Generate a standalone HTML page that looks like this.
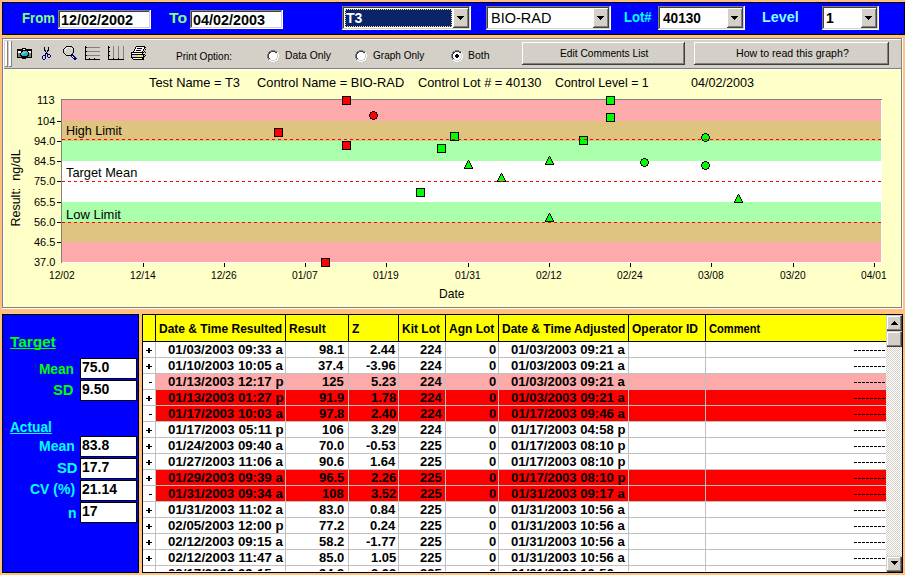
<!DOCTYPE html>
<html><head><meta charset="utf-8"><title>QC Chart</title>
<style>
html,body{margin:0;padding:0;}
body{width:905px;height:575px;position:relative;overflow:hidden;background:#FFC080;font-family:"Liberation Sans",sans-serif;}
.r{position:absolute;}
.t{position:absolute;white-space:nowrap;font-family:"Liberation Sans",sans-serif;}
svg{position:absolute;left:0;top:0;}
</style></head><body>
<div class="r" style="left:2px;top:2px;width:903px;height:33px;background:#0000FF;box-sizing:border-box;border:1px solid #000;"></div>
<div class="t" style="left:22.00px;top:11px;font-size:14px;line-height:14px;color:#80FF80;font-weight:bold;transform:scaleX(0.9429);transform-origin:0 0;">From</div>
<div class="r" style="left:58px;top:10px;width:93px;height:19px;background:#fff;"></div>
<div class="r" style="left:58px;top:10px;width:92px;height:1px;background:#808080;"></div>
<div class="r" style="left:58px;top:10px;width:1px;height:18px;background:#808080;"></div>
<div class="r" style="left:59px;top:11px;width:90px;height:1px;background:#404040;"></div>
<div class="r" style="left:59px;top:11px;width:1px;height:16px;background:#404040;"></div>
<div class="r" style="left:59px;top:27px;width:91px;height:1px;background:#D4D0C8;"></div>
<div class="r" style="left:149px;top:11px;width:1px;height:17px;background:#D4D0C8;"></div>
<div class="r" style="left:60px;top:12px;width:89px;height:15px;background:#fff;"></div>
<div class="t" style="left:61.00px;top:13px;font-size:14px;line-height:14px;color:#000;font-weight:bold;transform:scaleX(1.0286);transform-origin:0 0;">12/02/2002</div>
<div class="t" style="left:169.00px;top:11px;font-size:14px;line-height:14px;color:#80FF80;font-weight:bold;transform:scaleX(1.1250);transform-origin:0 0;">To</div>
<div class="r" style="left:190px;top:10px;width:93px;height:19px;background:#fff;"></div>
<div class="r" style="left:190px;top:10px;width:92px;height:1px;background:#808080;"></div>
<div class="r" style="left:190px;top:10px;width:1px;height:18px;background:#808080;"></div>
<div class="r" style="left:191px;top:11px;width:90px;height:1px;background:#404040;"></div>
<div class="r" style="left:191px;top:11px;width:1px;height:16px;background:#404040;"></div>
<div class="r" style="left:191px;top:27px;width:91px;height:1px;background:#D4D0C8;"></div>
<div class="r" style="left:281px;top:11px;width:1px;height:17px;background:#D4D0C8;"></div>
<div class="r" style="left:192px;top:12px;width:89px;height:15px;background:#fff;"></div>
<div class="t" style="left:193.00px;top:13px;font-size:14px;line-height:14px;color:#000;font-weight:bold;transform:scaleX(1.0286);transform-origin:0 0;">04/02/2003</div>
<div class="r" style="left:342px;top:6px;width:129px;height:24px;background:#fff;"></div>
<div class="r" style="left:342px;top:6px;width:128px;height:1px;background:#808080;"></div>
<div class="r" style="left:342px;top:6px;width:1px;height:23px;background:#808080;"></div>
<div class="r" style="left:343px;top:7px;width:126px;height:1px;background:#404040;"></div>
<div class="r" style="left:343px;top:7px;width:1px;height:21px;background:#404040;"></div>
<div class="r" style="left:343px;top:28px;width:127px;height:1px;background:#D4D0C8;"></div>
<div class="r" style="left:469px;top:7px;width:1px;height:22px;background:#D4D0C8;"></div>
<div class="r" style="left:344px;top:8px;width:125px;height:20px;background:#fff;"></div>
<div class="r" style="left:453px;top:8px;width:16px;height:20px;background:#D4D0C8;"></div>
<div class="r" style="left:453px;top:8px;width:16px;height:1px;background:#fff;"></div>
<div class="r" style="left:453px;top:8px;width:1px;height:20px;background:#fff;"></div>
<div class="r" style="left:453px;top:27px;width:16px;height:1px;background:#404040;"></div>
<div class="r" style="left:468px;top:8px;width:1px;height:20px;background:#404040;"></div>
<div class="r" style="left:454px;top:26px;width:14px;height:1px;background:#808080;"></div>
<div class="r" style="left:467px;top:9px;width:1px;height:18px;background:#808080;"></div>
<div class="r" style="left:457px;top:16px;width:7px;height:1px;background:#000;"></div>
<div class="r" style="left:458px;top:17px;width:5px;height:1px;background:#000;"></div>
<div class="r" style="left:459px;top:18px;width:3px;height:1px;background:#000;"></div>
<div class="r" style="left:460px;top:19px;width:1px;height:1px;background:#000;"></div>
<div class="r" style="left:344px;top:8px;width:109px;height:20px;background:#fff;"></div>
<div class="r" style="left:345px;top:9px;width:107px;height:18px;background:#0A246A;box-sizing:border-box;border:1px dotted #F0D890;"></div>
<div class="t" style="left:346.00px;top:11px;font-size:14px;line-height:14px;color:#fff;font-weight:bold;">T3</div>
<div class="r" style="left:486px;top:6px;width:125px;height:24px;background:#fff;"></div>
<div class="r" style="left:486px;top:6px;width:124px;height:1px;background:#808080;"></div>
<div class="r" style="left:486px;top:6px;width:1px;height:23px;background:#808080;"></div>
<div class="r" style="left:487px;top:7px;width:122px;height:1px;background:#404040;"></div>
<div class="r" style="left:487px;top:7px;width:1px;height:21px;background:#404040;"></div>
<div class="r" style="left:487px;top:28px;width:123px;height:1px;background:#D4D0C8;"></div>
<div class="r" style="left:609px;top:7px;width:1px;height:22px;background:#D4D0C8;"></div>
<div class="r" style="left:488px;top:8px;width:121px;height:20px;background:#fff;"></div>
<div class="r" style="left:593px;top:8px;width:16px;height:20px;background:#D4D0C8;"></div>
<div class="r" style="left:593px;top:8px;width:16px;height:1px;background:#fff;"></div>
<div class="r" style="left:593px;top:8px;width:1px;height:20px;background:#fff;"></div>
<div class="r" style="left:593px;top:27px;width:16px;height:1px;background:#404040;"></div>
<div class="r" style="left:608px;top:8px;width:1px;height:20px;background:#404040;"></div>
<div class="r" style="left:594px;top:26px;width:14px;height:1px;background:#808080;"></div>
<div class="r" style="left:607px;top:9px;width:1px;height:18px;background:#808080;"></div>
<div class="r" style="left:597px;top:16px;width:7px;height:1px;background:#000;"></div>
<div class="r" style="left:598px;top:17px;width:5px;height:1px;background:#000;"></div>
<div class="r" style="left:599px;top:18px;width:3px;height:1px;background:#000;"></div>
<div class="r" style="left:600px;top:19px;width:1px;height:1px;background:#000;"></div>
<div class="t" style="left:491.00px;top:11px;font-size:14px;line-height:14px;color:#000;transform:scaleX(1.0345);transform-origin:0 0;">BIO-RAD</div>
<div class="t" style="left:624.00px;top:10px;font-size:14px;line-height:14px;color:#00FFFF;font-weight:bold;transform:scaleX(0.9333);transform-origin:0 0;">Lot#</div>
<div class="r" style="left:658px;top:6px;width:87px;height:24px;background:#fff;"></div>
<div class="r" style="left:658px;top:6px;width:86px;height:1px;background:#808080;"></div>
<div class="r" style="left:658px;top:6px;width:1px;height:23px;background:#808080;"></div>
<div class="r" style="left:659px;top:7px;width:84px;height:1px;background:#404040;"></div>
<div class="r" style="left:659px;top:7px;width:1px;height:21px;background:#404040;"></div>
<div class="r" style="left:659px;top:28px;width:85px;height:1px;background:#D4D0C8;"></div>
<div class="r" style="left:743px;top:7px;width:1px;height:22px;background:#D4D0C8;"></div>
<div class="r" style="left:660px;top:8px;width:83px;height:20px;background:#fff;"></div>
<div class="r" style="left:727px;top:8px;width:16px;height:20px;background:#D4D0C8;"></div>
<div class="r" style="left:727px;top:8px;width:16px;height:1px;background:#fff;"></div>
<div class="r" style="left:727px;top:8px;width:1px;height:20px;background:#fff;"></div>
<div class="r" style="left:727px;top:27px;width:16px;height:1px;background:#404040;"></div>
<div class="r" style="left:742px;top:8px;width:1px;height:20px;background:#404040;"></div>
<div class="r" style="left:728px;top:26px;width:14px;height:1px;background:#808080;"></div>
<div class="r" style="left:741px;top:9px;width:1px;height:18px;background:#808080;"></div>
<div class="r" style="left:731px;top:16px;width:7px;height:1px;background:#000;"></div>
<div class="r" style="left:732px;top:17px;width:5px;height:1px;background:#000;"></div>
<div class="r" style="left:733px;top:18px;width:3px;height:1px;background:#000;"></div>
<div class="r" style="left:734px;top:19px;width:1px;height:1px;background:#000;"></div>
<div class="t" style="left:663.00px;top:11px;font-size:14px;line-height:14px;color:#000;font-weight:bold;transform:scaleX(0.9744);transform-origin:0 0;">40130</div>
<div class="t" style="left:762.00px;top:10px;font-size:14px;line-height:14px;color:#80FFFF;font-weight:bold;transform:scaleX(1.0278);transform-origin:0 0;">Level</div>
<div class="r" style="left:822px;top:6px;width:57px;height:24px;background:#fff;"></div>
<div class="r" style="left:822px;top:6px;width:56px;height:1px;background:#808080;"></div>
<div class="r" style="left:822px;top:6px;width:1px;height:23px;background:#808080;"></div>
<div class="r" style="left:823px;top:7px;width:54px;height:1px;background:#404040;"></div>
<div class="r" style="left:823px;top:7px;width:1px;height:21px;background:#404040;"></div>
<div class="r" style="left:823px;top:28px;width:55px;height:1px;background:#D4D0C8;"></div>
<div class="r" style="left:877px;top:7px;width:1px;height:22px;background:#D4D0C8;"></div>
<div class="r" style="left:824px;top:8px;width:53px;height:20px;background:#fff;"></div>
<div class="r" style="left:861px;top:8px;width:16px;height:20px;background:#D4D0C8;"></div>
<div class="r" style="left:861px;top:8px;width:16px;height:1px;background:#fff;"></div>
<div class="r" style="left:861px;top:8px;width:1px;height:20px;background:#fff;"></div>
<div class="r" style="left:861px;top:27px;width:16px;height:1px;background:#404040;"></div>
<div class="r" style="left:876px;top:8px;width:1px;height:20px;background:#404040;"></div>
<div class="r" style="left:862px;top:26px;width:14px;height:1px;background:#808080;"></div>
<div class="r" style="left:875px;top:9px;width:1px;height:18px;background:#808080;"></div>
<div class="r" style="left:865px;top:16px;width:7px;height:1px;background:#000;"></div>
<div class="r" style="left:866px;top:17px;width:5px;height:1px;background:#000;"></div>
<div class="r" style="left:867px;top:18px;width:3px;height:1px;background:#000;"></div>
<div class="r" style="left:868px;top:19px;width:1px;height:1px;background:#000;"></div>
<div class="t" style="left:826.00px;top:11px;font-size:14px;line-height:14px;color:#000;font-weight:bold;">1</div>
<div class="r" style="left:2px;top:38px;width:901px;height:271px;background:#FFFFC8;"></div>
<div class="r" style="left:2px;top:38px;width:900px;height:1px;background:#808080;"></div>
<div class="r" style="left:2px;top:38px;width:1px;height:270px;background:#808080;"></div>
<div class="r" style="left:2px;top:308px;width:901px;height:1px;background:#fff;"></div>
<div class="r" style="left:902px;top:38px;width:1px;height:271px;background:#fff;"></div>
<div class="r" style="left:3px;top:39px;width:899px;height:1px;background:#fff;"></div>
<div class="r" style="left:3px;top:39px;width:1px;height:269px;background:#fff;"></div>
<div class="r" style="left:3px;top:307px;width:899px;height:1px;background:#808080;"></div>
<div class="r" style="left:901px;top:39px;width:1px;height:269px;background:#808080;"></div>
<div class="r" style="left:4px;top:40px;width:897px;height:28px;background:#D4D0C8;"></div>
<div class="r" style="left:4px;top:68px;width:897px;height:1px;background:#808080;"></div>
<div class="r" style="left:4px;top:69px;width:897px;height:1px;background:#fff;"></div>
<div class="r" style="left:5px;top:41px;width:2px;height:25px;background:#fff;"></div>
<div class="r" style="left:7px;top:41px;width:1px;height:26px;background:#808080;"></div>
<div class="r" style="left:5px;top:66px;width:3px;height:1px;background:#808080;"></div>
<div class="r" style="left:9px;top:41px;width:2px;height:25px;background:#fff;"></div>
<div class="r" style="left:11px;top:41px;width:1px;height:26px;background:#808080;"></div>
<div class="r" style="left:9px;top:66px;width:3px;height:1px;background:#808080;"></div>
<div class="t" style="left:176.00px;top:51px;font-size:11px;line-height:11px;color:#000;transform:scaleX(0.9180);transform-origin:0 0;">Print Option:</div>
<svg width="905" height="575" viewBox="0 0 905 575" shape-rendering="crispEdges" style="pointer-events:none"><rect x="22" y="48" width="4" height="1" fill="#000"/><rect x="17" y="49" width="6" height="1" fill="#000"/><rect x="23" y="49" width="2" height="1" fill="#fff"/><rect x="25" y="49" width="7" height="1" fill="#000"/><rect x="17" y="50" width="15" height="1" fill="#000"/><rect x="17" y="51" width="1" height="1" fill="#000"/><rect x="18" y="51" width="3" height="1" fill="#fff"/><rect x="21" y="51" width="2" height="1" fill="#000"/><rect x="23" y="51" width="4" height="1" fill="#A0A0A0"/><rect x="27" y="51" width="1" height="1" fill="#000"/><rect x="28" y="51" width="3" height="1" fill="#fff"/><rect x="31" y="51" width="1" height="1" fill="#000"/><rect x="17" y="52" width="1" height="1" fill="#000"/><rect x="18" y="52" width="3" height="1" fill="#fff"/><rect x="21" y="52" width="1" height="1" fill="#000"/><rect x="22" y="52" width="1" height="1" fill="#A0A0A0"/><rect x="23" y="52" width="2" height="1" fill="#00FFFF"/><rect x="25" y="52" width="2" height="1" fill="#A0A0A0"/><rect x="27" y="52" width="1" height="1" fill="#00C0C0"/><rect x="28" y="52" width="1" height="1" fill="#000"/><rect x="29" y="52" width="2" height="1" fill="#fff"/><rect x="31" y="52" width="1" height="1" fill="#000"/><rect x="17" y="53" width="1" height="1" fill="#000"/><rect x="18" y="53" width="2" height="1" fill="#808080"/><rect x="20" y="53" width="1" height="1" fill="#000"/><rect x="21" y="53" width="1" height="1" fill="#A0A0A0"/><rect x="22" y="53" width="2" height="1" fill="#00FFFF"/><rect x="24" y="53" width="1" height="1" fill="#A0A0A0"/><rect x="25" y="53" width="3" height="1" fill="#00C0C0"/><rect x="28" y="53" width="1" height="1" fill="#000"/><rect x="29" y="53" width="2" height="1" fill="#808080"/><rect x="31" y="53" width="1" height="1" fill="#000"/><rect x="17" y="54" width="1" height="1" fill="#000"/><rect x="18" y="54" width="2" height="1" fill="#808080"/><rect x="20" y="54" width="1" height="1" fill="#000"/><rect x="21" y="54" width="2" height="1" fill="#A0A0A0"/><rect x="23" y="54" width="5" height="1" fill="#00C0C0"/><rect x="28" y="54" width="1" height="1" fill="#000"/><rect x="29" y="54" width="2" height="1" fill="#808080"/><rect x="31" y="54" width="1" height="1" fill="#000"/><rect x="17" y="55" width="1" height="1" fill="#000"/><rect x="18" y="55" width="2" height="1" fill="#808080"/><rect x="20" y="55" width="2" height="1" fill="#000"/><rect x="22" y="55" width="1" height="1" fill="#A0A0A0"/><rect x="23" y="55" width="4" height="1" fill="#00C0C0"/><rect x="27" y="55" width="2" height="1" fill="#000"/><rect x="29" y="55" width="2" height="1" fill="#808080"/><rect x="31" y="55" width="1" height="1" fill="#000"/><rect x="17" y="56" width="1" height="1" fill="#000"/><rect x="18" y="56" width="3" height="1" fill="#808080"/><rect x="21" y="56" width="7" height="1" fill="#000"/><rect x="28" y="56" width="3" height="1" fill="#808080"/><rect x="31" y="56" width="1" height="1" fill="#000"/><rect x="17" y="57" width="15" height="1" fill="#000"/><rect x="22" y="58" width="4" height="1" fill="#000"/><rect x="44" y="47" width="1" height="1" fill="#000"/><rect x="48" y="47" width="1" height="1" fill="#000"/><rect x="44" y="48" width="1" height="1" fill="#000"/><rect x="48" y="48" width="1" height="1" fill="#000"/><rect x="44" y="49" width="1" height="1" fill="#000"/><rect x="48" y="49" width="1" height="1" fill="#000"/><rect x="44" y="50" width="2" height="1" fill="#000"/><rect x="47" y="50" width="2" height="1" fill="#000"/><rect x="45" y="51" width="1" height="1" fill="#000"/><rect x="47" y="51" width="1" height="1" fill="#000"/><rect x="46" y="52" width="1" height="1" fill="#000"/><rect x="45" y="53" width="1" height="1" fill="#000080"/><rect x="46" y="53" width="1" height="1" fill="#000"/><rect x="47" y="53" width="1" height="1" fill="#000080"/><rect x="45" y="54" width="1" height="1" fill="#000080"/><rect x="47" y="54" width="3" height="1" fill="#000080"/><rect x="43" y="55" width="3" height="1" fill="#000080"/><rect x="47" y="55" width="1" height="1" fill="#000080"/><rect x="50" y="55" width="1" height="1" fill="#000080"/><rect x="42" y="56" width="1" height="1" fill="#000080"/><rect x="45" y="56" width="1" height="1" fill="#000080"/><rect x="47" y="56" width="1" height="1" fill="#000080"/><rect x="50" y="56" width="1" height="1" fill="#000080"/><rect x="42" y="57" width="1" height="1" fill="#000080"/><rect x="45" y="57" width="1" height="1" fill="#000080"/><rect x="48" y="57" width="2" height="1" fill="#000080"/><rect x="42" y="58" width="1" height="1" fill="#000080"/><rect x="45" y="58" width="1" height="1" fill="#000080"/><rect x="43" y="59" width="2" height="1" fill="#000080"/><rect x="66" y="46" width="6" height="1" fill="#000"/><rect x="65" y="47" width="1" height="1" fill="#000"/><rect x="67" y="47" width="3" height="1" fill="#fff"/><rect x="72" y="47" width="1" height="1" fill="#000"/><rect x="64" y="48" width="1" height="1" fill="#000"/><rect x="66" y="48" width="1" height="1" fill="#fff"/><rect x="71" y="48" width="1" height="1" fill="#fff"/><rect x="73" y="48" width="1" height="1" fill="#000"/><rect x="63" y="49" width="1" height="1" fill="#000"/><rect x="65" y="49" width="1" height="1" fill="#fff"/><rect x="73" y="49" width="1" height="1" fill="#000"/><rect x="63" y="50" width="1" height="1" fill="#000"/><rect x="65" y="50" width="1" height="1" fill="#fff"/><rect x="73" y="50" width="1" height="1" fill="#000"/><rect x="63" y="51" width="1" height="1" fill="#000"/><rect x="73" y="51" width="1" height="1" fill="#000"/><rect x="63" y="52" width="1" height="1" fill="#000"/><rect x="73" y="52" width="1" height="1" fill="#000"/><rect x="64" y="53" width="1" height="1" fill="#000"/><rect x="72" y="53" width="1" height="1" fill="#000"/><rect x="65" y="54" width="1" height="1" fill="#000"/><rect x="71" y="54" width="1" height="1" fill="#000"/><rect x="72" y="54" width="1" height="1" fill="#000080"/><rect x="66" y="55" width="5" height="1" fill="#000"/><rect x="71" y="55" width="3" height="1" fill="#000080"/><rect x="71" y="56" width="1" height="1" fill="#000080"/><rect x="72" y="56" width="1" height="1" fill="#fff"/><rect x="73" y="56" width="2" height="1" fill="#000080"/><rect x="72" y="57" width="1" height="1" fill="#000080"/><rect x="73" y="57" width="1" height="1" fill="#fff"/><rect x="74" y="57" width="2" height="1" fill="#000080"/><rect x="73" y="58" width="4" height="1" fill="#000080"/><rect x="74" y="59" width="2" height="1" fill="#000080"/><rect x="85" y="46" width="1" height="1" fill="#000"/><rect x="85" y="47" width="2" height="1" fill="#000"/><rect x="87" y="47" width="13" height="1" fill="#808080"/><rect x="85" y="48" width="1" height="1" fill="#000"/><rect x="85" y="49" width="1" height="1" fill="#000"/><rect x="85" y="50" width="1" height="1" fill="#000"/><rect x="85" y="51" width="2" height="1" fill="#000"/><rect x="87" y="51" width="13" height="1" fill="#808080"/><rect x="85" y="52" width="1" height="1" fill="#000"/><rect x="85" y="53" width="1" height="1" fill="#000"/><rect x="85" y="54" width="1" height="1" fill="#000"/><rect x="85" y="55" width="2" height="1" fill="#000"/><rect x="87" y="55" width="13" height="1" fill="#808080"/><rect x="85" y="56" width="1" height="1" fill="#000"/><rect x="85" y="57" width="1" height="1" fill="#000"/><rect x="85" y="58" width="1" height="1" fill="#000"/><rect x="89" y="58" width="1" height="1" fill="#000"/><rect x="94" y="58" width="1" height="1" fill="#000"/><rect x="85" y="59" width="15" height="1" fill="#000"/><rect x="108" y="46" width="1" height="1" fill="#000"/><rect x="113" y="46" width="1" height="1" fill="#808080"/><rect x="118" y="46" width="1" height="1" fill="#808080"/><rect x="123" y="46" width="1" height="1" fill="#808080"/><rect x="108" y="47" width="2" height="1" fill="#000"/><rect x="113" y="47" width="1" height="1" fill="#808080"/><rect x="118" y="47" width="1" height="1" fill="#808080"/><rect x="123" y="47" width="1" height="1" fill="#808080"/><rect x="108" y="48" width="1" height="1" fill="#000"/><rect x="113" y="48" width="1" height="1" fill="#808080"/><rect x="118" y="48" width="1" height="1" fill="#808080"/><rect x="123" y="48" width="1" height="1" fill="#808080"/><rect x="108" y="49" width="1" height="1" fill="#000"/><rect x="113" y="49" width="1" height="1" fill="#808080"/><rect x="118" y="49" width="1" height="1" fill="#808080"/><rect x="123" y="49" width="1" height="1" fill="#808080"/><rect x="108" y="50" width="1" height="1" fill="#000"/><rect x="113" y="50" width="1" height="1" fill="#808080"/><rect x="118" y="50" width="1" height="1" fill="#808080"/><rect x="123" y="50" width="1" height="1" fill="#808080"/><rect x="108" y="51" width="2" height="1" fill="#000"/><rect x="113" y="51" width="1" height="1" fill="#808080"/><rect x="118" y="51" width="1" height="1" fill="#808080"/><rect x="123" y="51" width="1" height="1" fill="#808080"/><rect x="108" y="52" width="1" height="1" fill="#000"/><rect x="113" y="52" width="1" height="1" fill="#808080"/><rect x="118" y="52" width="1" height="1" fill="#808080"/><rect x="123" y="52" width="1" height="1" fill="#808080"/><rect x="108" y="53" width="1" height="1" fill="#000"/><rect x="113" y="53" width="1" height="1" fill="#808080"/><rect x="118" y="53" width="1" height="1" fill="#808080"/><rect x="123" y="53" width="1" height="1" fill="#808080"/><rect x="108" y="54" width="1" height="1" fill="#000"/><rect x="113" y="54" width="1" height="1" fill="#808080"/><rect x="118" y="54" width="1" height="1" fill="#808080"/><rect x="123" y="54" width="1" height="1" fill="#808080"/><rect x="108" y="55" width="2" height="1" fill="#000"/><rect x="113" y="55" width="1" height="1" fill="#808080"/><rect x="118" y="55" width="1" height="1" fill="#808080"/><rect x="123" y="55" width="1" height="1" fill="#808080"/><rect x="108" y="56" width="1" height="1" fill="#000"/><rect x="113" y="56" width="1" height="1" fill="#808080"/><rect x="118" y="56" width="1" height="1" fill="#808080"/><rect x="123" y="56" width="1" height="1" fill="#808080"/><rect x="108" y="57" width="1" height="1" fill="#000"/><rect x="113" y="57" width="1" height="1" fill="#808080"/><rect x="118" y="57" width="1" height="1" fill="#808080"/><rect x="123" y="57" width="1" height="1" fill="#808080"/><rect x="108" y="58" width="1" height="1" fill="#000"/><rect x="113" y="58" width="1" height="1" fill="#000"/><rect x="118" y="58" width="1" height="1" fill="#000"/><rect x="123" y="58" width="1" height="1" fill="#808080"/><rect x="108" y="59" width="16" height="1" fill="#000"/><rect x="136" y="46" width="9" height="1" fill="#000"/><rect x="135" y="47" width="1" height="1" fill="#000"/><rect x="136" y="47" width="8" height="1" fill="#fff"/><rect x="144" y="47" width="2" height="1" fill="#000"/><rect x="135" y="48" width="1" height="1" fill="#000"/><rect x="136" y="48" width="1" height="1" fill="#fff"/><rect x="137" y="48" width="5" height="1" fill="#000"/><rect x="142" y="48" width="2" height="1" fill="#fff"/><rect x="144" y="48" width="1" height="1" fill="#000"/><rect x="134" y="49" width="1" height="1" fill="#000"/><rect x="135" y="49" width="8" height="1" fill="#fff"/><rect x="143" y="49" width="1" height="1" fill="#000"/><rect x="144" y="49" width="1" height="1" fill="#D4D0C8"/><rect x="145" y="49" width="1" height="1" fill="#000"/><rect x="134" y="50" width="1" height="1" fill="#000"/><rect x="135" y="50" width="1" height="1" fill="#fff"/><rect x="136" y="50" width="5" height="1" fill="#000"/><rect x="141" y="50" width="2" height="1" fill="#fff"/><rect x="143" y="50" width="1" height="1" fill="#000"/><rect x="144" y="50" width="1" height="1" fill="#D4D0C8"/><rect x="133" y="51" width="1" height="1" fill="#000"/><rect x="134" y="51" width="8" height="1" fill="#fff"/><rect x="142" y="51" width="1" height="1" fill="#000"/><rect x="144" y="51" width="1" height="1" fill="#000"/><rect x="131" y="52" width="13" height="1" fill="#000"/><rect x="144" y="52" width="1" height="1" fill="#D4D0C8"/><rect x="145" y="52" width="1" height="1" fill="#000"/><rect x="131" y="53" width="1" height="1" fill="#000"/><rect x="132" y="53" width="10" height="1" fill="#fff"/><rect x="142" y="53" width="1" height="1" fill="#000"/><rect x="143" y="53" width="2" height="1" fill="#D4D0C8"/><rect x="131" y="54" width="14" height="1" fill="#000"/><rect x="131" y="55" width="1" height="1" fill="#000"/><rect x="132" y="55" width="6" height="1" fill="#D4D0C8"/><rect x="138" y="55" width="3" height="1" fill="#FFFF00"/><rect x="141" y="55" width="2" height="1" fill="#D4D0C8"/><rect x="143" y="55" width="1" height="1" fill="#000"/><rect x="145" y="55" width="1" height="1" fill="#000"/><rect x="131" y="56" width="1" height="1" fill="#000"/><rect x="132" y="56" width="6" height="1" fill="#D4D0C8"/><rect x="138" y="56" width="3" height="1" fill="#FFFF00"/><rect x="141" y="56" width="2" height="1" fill="#D4D0C8"/><rect x="143" y="56" width="2" height="1" fill="#000"/><rect x="131" y="57" width="13" height="1" fill="#000"/><rect x="144" y="57" width="1" height="1" fill="#D4D0C8"/><rect x="132" y="58" width="1" height="1" fill="#000"/><rect x="133" y="58" width="9" height="1" fill="#fff"/><rect x="142" y="58" width="2" height="1" fill="#000"/><rect x="133" y="59" width="11" height="1" fill="#000"/><rect x="271" y="50" width="4" height="1" fill="#808080"/><rect x="269" y="51" width="2" height="1" fill="#808080"/><rect x="271" y="51" width="4" height="1" fill="#404040"/><rect x="275" y="51" width="2" height="1" fill="#808080"/><rect x="268" y="52" width="1" height="1" fill="#808080"/><rect x="269" y="52" width="2" height="1" fill="#404040"/><rect x="271" y="52" width="4" height="1" fill="#fff"/><rect x="275" y="52" width="2" height="1" fill="#404040"/><rect x="277" y="52" width="1" height="1" fill="#fff"/><rect x="268" y="53" width="1" height="1" fill="#808080"/><rect x="269" y="53" width="1" height="1" fill="#404040"/><rect x="270" y="53" width="6" height="1" fill="#fff"/><rect x="276" y="53" width="1" height="1" fill="#D4D0C8"/><rect x="277" y="53" width="1" height="1" fill="#fff"/><rect x="267" y="54" width="1" height="1" fill="#808080"/><rect x="268" y="54" width="1" height="1" fill="#404040"/><rect x="269" y="54" width="8" height="1" fill="#fff"/><rect x="277" y="54" width="1" height="1" fill="#D4D0C8"/><rect x="278" y="54" width="1" height="1" fill="#fff"/><rect x="267" y="55" width="1" height="1" fill="#808080"/><rect x="268" y="55" width="1" height="1" fill="#404040"/><rect x="269" y="55" width="8" height="1" fill="#fff"/><rect x="277" y="55" width="1" height="1" fill="#D4D0C8"/><rect x="278" y="55" width="1" height="1" fill="#fff"/><rect x="267" y="56" width="1" height="1" fill="#808080"/><rect x="268" y="56" width="1" height="1" fill="#404040"/><rect x="269" y="56" width="8" height="1" fill="#fff"/><rect x="277" y="56" width="1" height="1" fill="#D4D0C8"/><rect x="278" y="56" width="1" height="1" fill="#fff"/><rect x="267" y="57" width="1" height="1" fill="#808080"/><rect x="268" y="57" width="1" height="1" fill="#404040"/><rect x="269" y="57" width="8" height="1" fill="#fff"/><rect x="277" y="57" width="1" height="1" fill="#D4D0C8"/><rect x="278" y="57" width="1" height="1" fill="#fff"/><rect x="268" y="58" width="1" height="1" fill="#808080"/><rect x="269" y="58" width="1" height="1" fill="#404040"/><rect x="270" y="58" width="6" height="1" fill="#fff"/><rect x="276" y="58" width="1" height="1" fill="#D4D0C8"/><rect x="277" y="58" width="1" height="1" fill="#fff"/><rect x="268" y="59" width="1" height="1" fill="#808080"/><rect x="269" y="59" width="2" height="1" fill="#D4D0C8"/><rect x="271" y="59" width="4" height="1" fill="#fff"/><rect x="275" y="59" width="2" height="1" fill="#D4D0C8"/><rect x="277" y="59" width="1" height="1" fill="#fff"/><rect x="269" y="60" width="2" height="1" fill="#fff"/><rect x="271" y="60" width="4" height="1" fill="#D4D0C8"/><rect x="275" y="60" width="2" height="1" fill="#fff"/><rect x="271" y="61" width="4" height="1" fill="#fff"/><rect x="359" y="50" width="4" height="1" fill="#808080"/><rect x="357" y="51" width="2" height="1" fill="#808080"/><rect x="359" y="51" width="4" height="1" fill="#404040"/><rect x="363" y="51" width="2" height="1" fill="#808080"/><rect x="356" y="52" width="1" height="1" fill="#808080"/><rect x="357" y="52" width="2" height="1" fill="#404040"/><rect x="359" y="52" width="4" height="1" fill="#fff"/><rect x="363" y="52" width="2" height="1" fill="#404040"/><rect x="365" y="52" width="1" height="1" fill="#fff"/><rect x="356" y="53" width="1" height="1" fill="#808080"/><rect x="357" y="53" width="1" height="1" fill="#404040"/><rect x="358" y="53" width="6" height="1" fill="#fff"/><rect x="364" y="53" width="1" height="1" fill="#D4D0C8"/><rect x="365" y="53" width="1" height="1" fill="#fff"/><rect x="355" y="54" width="1" height="1" fill="#808080"/><rect x="356" y="54" width="1" height="1" fill="#404040"/><rect x="357" y="54" width="8" height="1" fill="#fff"/><rect x="365" y="54" width="1" height="1" fill="#D4D0C8"/><rect x="366" y="54" width="1" height="1" fill="#fff"/><rect x="355" y="55" width="1" height="1" fill="#808080"/><rect x="356" y="55" width="1" height="1" fill="#404040"/><rect x="357" y="55" width="8" height="1" fill="#fff"/><rect x="365" y="55" width="1" height="1" fill="#D4D0C8"/><rect x="366" y="55" width="1" height="1" fill="#fff"/><rect x="355" y="56" width="1" height="1" fill="#808080"/><rect x="356" y="56" width="1" height="1" fill="#404040"/><rect x="357" y="56" width="8" height="1" fill="#fff"/><rect x="365" y="56" width="1" height="1" fill="#D4D0C8"/><rect x="366" y="56" width="1" height="1" fill="#fff"/><rect x="355" y="57" width="1" height="1" fill="#808080"/><rect x="356" y="57" width="1" height="1" fill="#404040"/><rect x="357" y="57" width="8" height="1" fill="#fff"/><rect x="365" y="57" width="1" height="1" fill="#D4D0C8"/><rect x="366" y="57" width="1" height="1" fill="#fff"/><rect x="356" y="58" width="1" height="1" fill="#808080"/><rect x="357" y="58" width="1" height="1" fill="#404040"/><rect x="358" y="58" width="6" height="1" fill="#fff"/><rect x="364" y="58" width="1" height="1" fill="#D4D0C8"/><rect x="365" y="58" width="1" height="1" fill="#fff"/><rect x="356" y="59" width="1" height="1" fill="#808080"/><rect x="357" y="59" width="2" height="1" fill="#D4D0C8"/><rect x="359" y="59" width="4" height="1" fill="#fff"/><rect x="363" y="59" width="2" height="1" fill="#D4D0C8"/><rect x="365" y="59" width="1" height="1" fill="#fff"/><rect x="357" y="60" width="2" height="1" fill="#fff"/><rect x="359" y="60" width="4" height="1" fill="#D4D0C8"/><rect x="363" y="60" width="2" height="1" fill="#fff"/><rect x="359" y="61" width="4" height="1" fill="#fff"/><rect x="455" y="50" width="4" height="1" fill="#808080"/><rect x="453" y="51" width="2" height="1" fill="#808080"/><rect x="455" y="51" width="4" height="1" fill="#404040"/><rect x="459" y="51" width="2" height="1" fill="#808080"/><rect x="452" y="52" width="1" height="1" fill="#808080"/><rect x="453" y="52" width="2" height="1" fill="#404040"/><rect x="455" y="52" width="4" height="1" fill="#fff"/><rect x="459" y="52" width="2" height="1" fill="#404040"/><rect x="461" y="52" width="1" height="1" fill="#fff"/><rect x="452" y="53" width="1" height="1" fill="#808080"/><rect x="453" y="53" width="1" height="1" fill="#404040"/><rect x="454" y="53" width="6" height="1" fill="#fff"/><rect x="460" y="53" width="1" height="1" fill="#D4D0C8"/><rect x="461" y="53" width="1" height="1" fill="#fff"/><rect x="451" y="54" width="1" height="1" fill="#808080"/><rect x="452" y="54" width="1" height="1" fill="#404040"/><rect x="453" y="54" width="8" height="1" fill="#fff"/><rect x="461" y="54" width="1" height="1" fill="#D4D0C8"/><rect x="462" y="54" width="1" height="1" fill="#fff"/><rect x="451" y="55" width="1" height="1" fill="#808080"/><rect x="452" y="55" width="1" height="1" fill="#404040"/><rect x="453" y="55" width="8" height="1" fill="#fff"/><rect x="461" y="55" width="1" height="1" fill="#D4D0C8"/><rect x="462" y="55" width="1" height="1" fill="#fff"/><rect x="451" y="56" width="1" height="1" fill="#808080"/><rect x="452" y="56" width="1" height="1" fill="#404040"/><rect x="453" y="56" width="8" height="1" fill="#fff"/><rect x="461" y="56" width="1" height="1" fill="#D4D0C8"/><rect x="462" y="56" width="1" height="1" fill="#fff"/><rect x="451" y="57" width="1" height="1" fill="#808080"/><rect x="452" y="57" width="1" height="1" fill="#404040"/><rect x="453" y="57" width="8" height="1" fill="#fff"/><rect x="461" y="57" width="1" height="1" fill="#D4D0C8"/><rect x="462" y="57" width="1" height="1" fill="#fff"/><rect x="452" y="58" width="1" height="1" fill="#808080"/><rect x="453" y="58" width="1" height="1" fill="#404040"/><rect x="454" y="58" width="6" height="1" fill="#fff"/><rect x="460" y="58" width="1" height="1" fill="#D4D0C8"/><rect x="461" y="58" width="1" height="1" fill="#fff"/><rect x="452" y="59" width="1" height="1" fill="#808080"/><rect x="453" y="59" width="2" height="1" fill="#D4D0C8"/><rect x="455" y="59" width="4" height="1" fill="#fff"/><rect x="459" y="59" width="2" height="1" fill="#D4D0C8"/><rect x="461" y="59" width="1" height="1" fill="#fff"/><rect x="453" y="60" width="2" height="1" fill="#fff"/><rect x="455" y="60" width="4" height="1" fill="#D4D0C8"/><rect x="459" y="60" width="2" height="1" fill="#fff"/><rect x="455" y="61" width="4" height="1" fill="#fff"/><rect x="456" y="54" width="2" height="1" fill="#000"/><rect x="455" y="55" width="4" height="1" fill="#000"/><rect x="455" y="56" width="4" height="1" fill="#000"/><rect x="456" y="57" width="2" height="1" fill="#000"/></svg>
<div class="t" style="left:285.00px;top:50px;font-size:11px;line-height:11px;color:#000;transform:scaleX(0.9388);transform-origin:0 0;">Data Only</div>
<div class="t" style="left:373.00px;top:50px;font-size:11px;line-height:11px;color:#000;transform:scaleX(0.9123);transform-origin:0 0;">Graph Only</div>
<div class="t" style="left:468.00px;top:50px;font-size:11px;line-height:11px;color:#000;transform:scaleX(0.9565);transform-origin:0 0;">Both</div>
<div class="r" style="left:522px;top:42px;width:163px;height:23px;background:#D4D0C8;"></div>
<div class="r" style="left:522px;top:42px;width:163px;height:1px;background:#fff;"></div>
<div class="r" style="left:522px;top:42px;width:1px;height:23px;background:#fff;"></div>
<div class="r" style="left:522px;top:64px;width:163px;height:1px;background:#404040;"></div>
<div class="r" style="left:684px;top:42px;width:1px;height:23px;background:#404040;"></div>
<div class="r" style="left:523px;top:63px;width:161px;height:1px;background:#808080;"></div>
<div class="r" style="left:683px;top:43px;width:1px;height:21px;background:#808080;"></div>
<div class="t" style="left:560.00px;top:48px;font-size:11px;line-height:11px;color:#000;transform:scaleX(0.9263);transform-origin:0 0;">Edit Comments List</div>
<div class="r" style="left:694px;top:42px;width:195px;height:23px;background:#D4D0C8;"></div>
<div class="r" style="left:694px;top:42px;width:195px;height:1px;background:#fff;"></div>
<div class="r" style="left:694px;top:42px;width:1px;height:23px;background:#fff;"></div>
<div class="r" style="left:694px;top:64px;width:195px;height:1px;background:#404040;"></div>
<div class="r" style="left:888px;top:42px;width:1px;height:23px;background:#404040;"></div>
<div class="r" style="left:695px;top:63px;width:193px;height:1px;background:#808080;"></div>
<div class="r" style="left:887px;top:43px;width:1px;height:21px;background:#808080;"></div>
<div class="t" style="left:736.00px;top:48px;font-size:11px;line-height:11px;color:#000;transform:scaleX(0.9658);transform-origin:0 0;">How to read this graph?</div>
<svg width="905" height="575" viewBox="0 0 905 575" shape-rendering="crispEdges" style="pointer-events:none"><rect x="62" y="100" width="819" height="21" fill="#FFAAAA"/><rect x="62" y="121" width="819" height="20" fill="#DEC47E"/><rect x="62" y="141" width="819" height="20" fill="#AAFFAA"/><rect x="62" y="161" width="819" height="41" fill="#FFFFFF"/><rect x="62" y="202" width="819" height="20" fill="#AAFFAA"/><rect x="62" y="222" width="819" height="20" fill="#DEC47E"/><rect x="62" y="242" width="819" height="20" fill="#FFAAAA"/><rect x="61" y="99" width="821" height="1" fill="#808080"/><rect x="61" y="99" width="1" height="164" fill="#808080"/><rect x="62" y="262" width="820" height="1" fill="#fff"/><rect x="881" y="100" width="1" height="163" fill="#fff"/><rect x="57" y="121" width="4" height="1" fill="#000"/><rect x="57" y="141" width="4" height="1" fill="#000"/><rect x="57" y="161" width="4" height="1" fill="#000"/><rect x="57" y="181" width="4" height="1" fill="#000"/><rect x="57" y="202" width="4" height="1" fill="#000"/><rect x="57" y="222" width="4" height="1" fill="#000"/><rect x="57" y="242" width="4" height="1" fill="#000"/><rect x="143" y="263" width="1" height="4" fill="#000"/><rect x="224" y="263" width="1" height="4" fill="#000"/><rect x="305" y="263" width="1" height="4" fill="#000"/><rect x="386" y="263" width="1" height="4" fill="#000"/><rect x="468" y="263" width="1" height="4" fill="#000"/><rect x="549" y="263" width="1" height="4" fill="#000"/><rect x="630" y="263" width="1" height="4" fill="#000"/><rect x="711" y="263" width="1" height="4" fill="#000"/><rect x="793" y="263" width="1" height="4" fill="#000"/><rect x="874" y="263" width="1" height="4" fill="#000"/><rect x="274" y="128" width="9" height="1" fill="#000"/><rect x="274" y="129" width="1" height="1" fill="#000"/><rect x="275" y="129" width="7" height="1" fill="#FF0000"/><rect x="282" y="129" width="1" height="1" fill="#000"/><rect x="274" y="130" width="1" height="1" fill="#000"/><rect x="275" y="130" width="7" height="1" fill="#FF0000"/><rect x="282" y="130" width="1" height="1" fill="#000"/><rect x="274" y="131" width="1" height="1" fill="#000"/><rect x="275" y="131" width="7" height="1" fill="#FF0000"/><rect x="282" y="131" width="1" height="1" fill="#000"/><rect x="274" y="132" width="1" height="1" fill="#000"/><rect x="275" y="132" width="7" height="1" fill="#FF0000"/><rect x="282" y="132" width="1" height="1" fill="#000"/><rect x="274" y="133" width="1" height="1" fill="#000"/><rect x="275" y="133" width="7" height="1" fill="#FF0000"/><rect x="282" y="133" width="1" height="1" fill="#000"/><rect x="274" y="134" width="1" height="1" fill="#000"/><rect x="275" y="134" width="7" height="1" fill="#FF0000"/><rect x="282" y="134" width="1" height="1" fill="#000"/><rect x="274" y="135" width="1" height="1" fill="#000"/><rect x="275" y="135" width="7" height="1" fill="#FF0000"/><rect x="282" y="135" width="1" height="1" fill="#000"/><rect x="274" y="136" width="9" height="1" fill="#000"/><rect x="342" y="96" width="9" height="1" fill="#000"/><rect x="342" y="97" width="1" height="1" fill="#000"/><rect x="343" y="97" width="7" height="1" fill="#FF0000"/><rect x="350" y="97" width="1" height="1" fill="#000"/><rect x="342" y="98" width="1" height="1" fill="#000"/><rect x="343" y="98" width="7" height="1" fill="#FF0000"/><rect x="350" y="98" width="1" height="1" fill="#000"/><rect x="342" y="99" width="1" height="1" fill="#000"/><rect x="343" y="99" width="7" height="1" fill="#FF0000"/><rect x="350" y="99" width="1" height="1" fill="#000"/><rect x="342" y="100" width="1" height="1" fill="#000"/><rect x="343" y="100" width="7" height="1" fill="#FF0000"/><rect x="350" y="100" width="1" height="1" fill="#000"/><rect x="342" y="101" width="1" height="1" fill="#000"/><rect x="343" y="101" width="7" height="1" fill="#FF0000"/><rect x="350" y="101" width="1" height="1" fill="#000"/><rect x="342" y="102" width="1" height="1" fill="#000"/><rect x="343" y="102" width="7" height="1" fill="#FF0000"/><rect x="350" y="102" width="1" height="1" fill="#000"/><rect x="342" y="103" width="1" height="1" fill="#000"/><rect x="343" y="103" width="7" height="1" fill="#FF0000"/><rect x="350" y="103" width="1" height="1" fill="#000"/><rect x="342" y="104" width="9" height="1" fill="#000"/><rect x="342" y="141" width="9" height="1" fill="#000"/><rect x="342" y="142" width="1" height="1" fill="#000"/><rect x="343" y="142" width="7" height="1" fill="#FF0000"/><rect x="350" y="142" width="1" height="1" fill="#000"/><rect x="342" y="143" width="1" height="1" fill="#000"/><rect x="343" y="143" width="7" height="1" fill="#FF0000"/><rect x="350" y="143" width="1" height="1" fill="#000"/><rect x="342" y="144" width="1" height="1" fill="#000"/><rect x="343" y="144" width="7" height="1" fill="#FF0000"/><rect x="350" y="144" width="1" height="1" fill="#000"/><rect x="342" y="145" width="1" height="1" fill="#000"/><rect x="343" y="145" width="7" height="1" fill="#FF0000"/><rect x="350" y="145" width="1" height="1" fill="#000"/><rect x="342" y="146" width="1" height="1" fill="#000"/><rect x="343" y="146" width="7" height="1" fill="#FF0000"/><rect x="350" y="146" width="1" height="1" fill="#000"/><rect x="342" y="147" width="1" height="1" fill="#000"/><rect x="343" y="147" width="7" height="1" fill="#FF0000"/><rect x="350" y="147" width="1" height="1" fill="#000"/><rect x="342" y="148" width="1" height="1" fill="#000"/><rect x="343" y="148" width="7" height="1" fill="#FF0000"/><rect x="350" y="148" width="1" height="1" fill="#000"/><rect x="342" y="149" width="9" height="1" fill="#000"/><rect x="321" y="258" width="9" height="1" fill="#000"/><rect x="321" y="259" width="1" height="1" fill="#000"/><rect x="322" y="259" width="7" height="1" fill="#FF0000"/><rect x="329" y="259" width="1" height="1" fill="#000"/><rect x="321" y="260" width="1" height="1" fill="#000"/><rect x="322" y="260" width="7" height="1" fill="#FF0000"/><rect x="329" y="260" width="1" height="1" fill="#000"/><rect x="321" y="261" width="1" height="1" fill="#000"/><rect x="322" y="261" width="7" height="1" fill="#FF0000"/><rect x="329" y="261" width="1" height="1" fill="#000"/><rect x="321" y="262" width="1" height="1" fill="#000"/><rect x="322" y="262" width="7" height="1" fill="#FF0000"/><rect x="329" y="262" width="1" height="1" fill="#000"/><rect x="321" y="263" width="1" height="1" fill="#000"/><rect x="322" y="263" width="7" height="1" fill="#FF0000"/><rect x="329" y="263" width="1" height="1" fill="#000"/><rect x="321" y="264" width="1" height="1" fill="#000"/><rect x="322" y="264" width="7" height="1" fill="#FF0000"/><rect x="329" y="264" width="1" height="1" fill="#000"/><rect x="321" y="265" width="1" height="1" fill="#000"/><rect x="322" y="265" width="7" height="1" fill="#FF0000"/><rect x="329" y="265" width="1" height="1" fill="#000"/><rect x="321" y="266" width="9" height="1" fill="#000"/><rect x="372" y="111" width="3" height="1" fill="#000"/><rect x="370" y="112" width="2" height="1" fill="#000"/><rect x="372" y="112" width="3" height="1" fill="#FF0000"/><rect x="375" y="112" width="2" height="1" fill="#000"/><rect x="370" y="113" width="1" height="1" fill="#000"/><rect x="371" y="113" width="5" height="1" fill="#FF0000"/><rect x="376" y="113" width="1" height="1" fill="#000"/><rect x="369" y="114" width="1" height="1" fill="#000"/><rect x="370" y="114" width="7" height="1" fill="#FF0000"/><rect x="377" y="114" width="1" height="1" fill="#000"/><rect x="369" y="115" width="1" height="1" fill="#000"/><rect x="370" y="115" width="7" height="1" fill="#FF0000"/><rect x="377" y="115" width="1" height="1" fill="#000"/><rect x="369" y="116" width="1" height="1" fill="#000"/><rect x="370" y="116" width="7" height="1" fill="#FF0000"/><rect x="377" y="116" width="1" height="1" fill="#000"/><rect x="370" y="117" width="1" height="1" fill="#000"/><rect x="371" y="117" width="5" height="1" fill="#FF0000"/><rect x="376" y="117" width="1" height="1" fill="#000"/><rect x="370" y="118" width="2" height="1" fill="#000"/><rect x="372" y="118" width="3" height="1" fill="#FF0000"/><rect x="375" y="118" width="2" height="1" fill="#000"/><rect x="372" y="119" width="3" height="1" fill="#000"/><rect x="416" y="188" width="9" height="1" fill="#000"/><rect x="416" y="189" width="1" height="1" fill="#000"/><rect x="417" y="189" width="7" height="1" fill="#00FF00"/><rect x="424" y="189" width="1" height="1" fill="#000"/><rect x="416" y="190" width="1" height="1" fill="#000"/><rect x="417" y="190" width="7" height="1" fill="#00FF00"/><rect x="424" y="190" width="1" height="1" fill="#000"/><rect x="416" y="191" width="1" height="1" fill="#000"/><rect x="417" y="191" width="7" height="1" fill="#00FF00"/><rect x="424" y="191" width="1" height="1" fill="#000"/><rect x="416" y="192" width="1" height="1" fill="#000"/><rect x="417" y="192" width="7" height="1" fill="#00FF00"/><rect x="424" y="192" width="1" height="1" fill="#000"/><rect x="416" y="193" width="1" height="1" fill="#000"/><rect x="417" y="193" width="7" height="1" fill="#00FF00"/><rect x="424" y="193" width="1" height="1" fill="#000"/><rect x="416" y="194" width="1" height="1" fill="#000"/><rect x="417" y="194" width="7" height="1" fill="#00FF00"/><rect x="424" y="194" width="1" height="1" fill="#000"/><rect x="416" y="195" width="1" height="1" fill="#000"/><rect x="417" y="195" width="7" height="1" fill="#00FF00"/><rect x="424" y="195" width="1" height="1" fill="#000"/><rect x="416" y="196" width="9" height="1" fill="#000"/><rect x="437" y="144" width="9" height="1" fill="#000"/><rect x="437" y="145" width="1" height="1" fill="#000"/><rect x="438" y="145" width="7" height="1" fill="#00FF00"/><rect x="445" y="145" width="1" height="1" fill="#000"/><rect x="437" y="146" width="1" height="1" fill="#000"/><rect x="438" y="146" width="7" height="1" fill="#00FF00"/><rect x="445" y="146" width="1" height="1" fill="#000"/><rect x="437" y="147" width="1" height="1" fill="#000"/><rect x="438" y="147" width="7" height="1" fill="#00FF00"/><rect x="445" y="147" width="1" height="1" fill="#000"/><rect x="437" y="148" width="1" height="1" fill="#000"/><rect x="438" y="148" width="7" height="1" fill="#00FF00"/><rect x="445" y="148" width="1" height="1" fill="#000"/><rect x="437" y="149" width="1" height="1" fill="#000"/><rect x="438" y="149" width="7" height="1" fill="#00FF00"/><rect x="445" y="149" width="1" height="1" fill="#000"/><rect x="437" y="150" width="1" height="1" fill="#000"/><rect x="438" y="150" width="7" height="1" fill="#00FF00"/><rect x="445" y="150" width="1" height="1" fill="#000"/><rect x="437" y="151" width="1" height="1" fill="#000"/><rect x="438" y="151" width="7" height="1" fill="#00FF00"/><rect x="445" y="151" width="1" height="1" fill="#000"/><rect x="437" y="152" width="9" height="1" fill="#000"/><rect x="450" y="132" width="9" height="1" fill="#000"/><rect x="450" y="133" width="1" height="1" fill="#000"/><rect x="451" y="133" width="7" height="1" fill="#00FF00"/><rect x="458" y="133" width="1" height="1" fill="#000"/><rect x="450" y="134" width="1" height="1" fill="#000"/><rect x="451" y="134" width="7" height="1" fill="#00FF00"/><rect x="458" y="134" width="1" height="1" fill="#000"/><rect x="450" y="135" width="1" height="1" fill="#000"/><rect x="451" y="135" width="7" height="1" fill="#00FF00"/><rect x="458" y="135" width="1" height="1" fill="#000"/><rect x="450" y="136" width="1" height="1" fill="#000"/><rect x="451" y="136" width="7" height="1" fill="#00FF00"/><rect x="458" y="136" width="1" height="1" fill="#000"/><rect x="450" y="137" width="1" height="1" fill="#000"/><rect x="451" y="137" width="7" height="1" fill="#00FF00"/><rect x="458" y="137" width="1" height="1" fill="#000"/><rect x="450" y="138" width="1" height="1" fill="#000"/><rect x="451" y="138" width="7" height="1" fill="#00FF00"/><rect x="458" y="138" width="1" height="1" fill="#000"/><rect x="450" y="139" width="1" height="1" fill="#000"/><rect x="451" y="139" width="7" height="1" fill="#00FF00"/><rect x="458" y="139" width="1" height="1" fill="#000"/><rect x="450" y="140" width="9" height="1" fill="#000"/><rect x="579" y="136" width="9" height="1" fill="#000"/><rect x="579" y="137" width="1" height="1" fill="#000"/><rect x="580" y="137" width="7" height="1" fill="#00FF00"/><rect x="587" y="137" width="1" height="1" fill="#000"/><rect x="579" y="138" width="1" height="1" fill="#000"/><rect x="580" y="138" width="7" height="1" fill="#00FF00"/><rect x="587" y="138" width="1" height="1" fill="#000"/><rect x="579" y="139" width="1" height="1" fill="#000"/><rect x="580" y="139" width="7" height="1" fill="#00FF00"/><rect x="587" y="139" width="1" height="1" fill="#000"/><rect x="579" y="140" width="1" height="1" fill="#000"/><rect x="580" y="140" width="7" height="1" fill="#00FF00"/><rect x="587" y="140" width="1" height="1" fill="#000"/><rect x="579" y="141" width="1" height="1" fill="#000"/><rect x="580" y="141" width="7" height="1" fill="#00FF00"/><rect x="587" y="141" width="1" height="1" fill="#000"/><rect x="579" y="142" width="1" height="1" fill="#000"/><rect x="580" y="142" width="7" height="1" fill="#00FF00"/><rect x="587" y="142" width="1" height="1" fill="#000"/><rect x="579" y="143" width="1" height="1" fill="#000"/><rect x="580" y="143" width="7" height="1" fill="#00FF00"/><rect x="587" y="143" width="1" height="1" fill="#000"/><rect x="579" y="144" width="9" height="1" fill="#000"/><rect x="606" y="96" width="9" height="1" fill="#000"/><rect x="606" y="97" width="1" height="1" fill="#000"/><rect x="607" y="97" width="7" height="1" fill="#00FF00"/><rect x="614" y="97" width="1" height="1" fill="#000"/><rect x="606" y="98" width="1" height="1" fill="#000"/><rect x="607" y="98" width="7" height="1" fill="#00FF00"/><rect x="614" y="98" width="1" height="1" fill="#000"/><rect x="606" y="99" width="1" height="1" fill="#000"/><rect x="607" y="99" width="7" height="1" fill="#00FF00"/><rect x="614" y="99" width="1" height="1" fill="#000"/><rect x="606" y="100" width="1" height="1" fill="#000"/><rect x="607" y="100" width="7" height="1" fill="#00FF00"/><rect x="614" y="100" width="1" height="1" fill="#000"/><rect x="606" y="101" width="1" height="1" fill="#000"/><rect x="607" y="101" width="7" height="1" fill="#00FF00"/><rect x="614" y="101" width="1" height="1" fill="#000"/><rect x="606" y="102" width="1" height="1" fill="#000"/><rect x="607" y="102" width="7" height="1" fill="#00FF00"/><rect x="614" y="102" width="1" height="1" fill="#000"/><rect x="606" y="103" width="1" height="1" fill="#000"/><rect x="607" y="103" width="7" height="1" fill="#00FF00"/><rect x="614" y="103" width="1" height="1" fill="#000"/><rect x="606" y="104" width="9" height="1" fill="#000"/><rect x="606" y="113" width="9" height="1" fill="#000"/><rect x="606" y="114" width="1" height="1" fill="#000"/><rect x="607" y="114" width="7" height="1" fill="#00FF00"/><rect x="614" y="114" width="1" height="1" fill="#000"/><rect x="606" y="115" width="1" height="1" fill="#000"/><rect x="607" y="115" width="7" height="1" fill="#00FF00"/><rect x="614" y="115" width="1" height="1" fill="#000"/><rect x="606" y="116" width="1" height="1" fill="#000"/><rect x="607" y="116" width="7" height="1" fill="#00FF00"/><rect x="614" y="116" width="1" height="1" fill="#000"/><rect x="606" y="117" width="1" height="1" fill="#000"/><rect x="607" y="117" width="7" height="1" fill="#00FF00"/><rect x="614" y="117" width="1" height="1" fill="#000"/><rect x="606" y="118" width="1" height="1" fill="#000"/><rect x="607" y="118" width="7" height="1" fill="#00FF00"/><rect x="614" y="118" width="1" height="1" fill="#000"/><rect x="606" y="119" width="1" height="1" fill="#000"/><rect x="607" y="119" width="7" height="1" fill="#00FF00"/><rect x="614" y="119" width="1" height="1" fill="#000"/><rect x="606" y="120" width="1" height="1" fill="#000"/><rect x="607" y="120" width="7" height="1" fill="#00FF00"/><rect x="614" y="120" width="1" height="1" fill="#000"/><rect x="606" y="121" width="9" height="1" fill="#000"/><rect x="643" y="158" width="3" height="1" fill="#000"/><rect x="641" y="159" width="2" height="1" fill="#000"/><rect x="643" y="159" width="3" height="1" fill="#00FF00"/><rect x="646" y="159" width="2" height="1" fill="#000"/><rect x="641" y="160" width="1" height="1" fill="#000"/><rect x="642" y="160" width="5" height="1" fill="#00FF00"/><rect x="647" y="160" width="1" height="1" fill="#000"/><rect x="640" y="161" width="1" height="1" fill="#000"/><rect x="641" y="161" width="7" height="1" fill="#00FF00"/><rect x="648" y="161" width="1" height="1" fill="#000"/><rect x="640" y="162" width="1" height="1" fill="#000"/><rect x="641" y="162" width="7" height="1" fill="#00FF00"/><rect x="648" y="162" width="1" height="1" fill="#000"/><rect x="640" y="163" width="1" height="1" fill="#000"/><rect x="641" y="163" width="7" height="1" fill="#00FF00"/><rect x="648" y="163" width="1" height="1" fill="#000"/><rect x="641" y="164" width="1" height="1" fill="#000"/><rect x="642" y="164" width="5" height="1" fill="#00FF00"/><rect x="647" y="164" width="1" height="1" fill="#000"/><rect x="641" y="165" width="2" height="1" fill="#000"/><rect x="643" y="165" width="3" height="1" fill="#00FF00"/><rect x="646" y="165" width="2" height="1" fill="#000"/><rect x="643" y="166" width="3" height="1" fill="#000"/><rect x="704" y="133" width="3" height="1" fill="#000"/><rect x="702" y="134" width="2" height="1" fill="#000"/><rect x="704" y="134" width="3" height="1" fill="#00FF00"/><rect x="707" y="134" width="2" height="1" fill="#000"/><rect x="702" y="135" width="1" height="1" fill="#000"/><rect x="703" y="135" width="5" height="1" fill="#00FF00"/><rect x="708" y="135" width="1" height="1" fill="#000"/><rect x="701" y="136" width="1" height="1" fill="#000"/><rect x="702" y="136" width="7" height="1" fill="#00FF00"/><rect x="709" y="136" width="1" height="1" fill="#000"/><rect x="701" y="137" width="1" height="1" fill="#000"/><rect x="702" y="137" width="7" height="1" fill="#00FF00"/><rect x="709" y="137" width="1" height="1" fill="#000"/><rect x="701" y="138" width="1" height="1" fill="#000"/><rect x="702" y="138" width="7" height="1" fill="#00FF00"/><rect x="709" y="138" width="1" height="1" fill="#000"/><rect x="702" y="139" width="1" height="1" fill="#000"/><rect x="703" y="139" width="5" height="1" fill="#00FF00"/><rect x="708" y="139" width="1" height="1" fill="#000"/><rect x="702" y="140" width="2" height="1" fill="#000"/><rect x="704" y="140" width="3" height="1" fill="#00FF00"/><rect x="707" y="140" width="2" height="1" fill="#000"/><rect x="704" y="141" width="3" height="1" fill="#000"/><rect x="704" y="161" width="3" height="1" fill="#000"/><rect x="702" y="162" width="2" height="1" fill="#000"/><rect x="704" y="162" width="3" height="1" fill="#00FF00"/><rect x="707" y="162" width="2" height="1" fill="#000"/><rect x="702" y="163" width="1" height="1" fill="#000"/><rect x="703" y="163" width="5" height="1" fill="#00FF00"/><rect x="708" y="163" width="1" height="1" fill="#000"/><rect x="701" y="164" width="1" height="1" fill="#000"/><rect x="702" y="164" width="7" height="1" fill="#00FF00"/><rect x="709" y="164" width="1" height="1" fill="#000"/><rect x="701" y="165" width="1" height="1" fill="#000"/><rect x="702" y="165" width="7" height="1" fill="#00FF00"/><rect x="709" y="165" width="1" height="1" fill="#000"/><rect x="701" y="166" width="1" height="1" fill="#000"/><rect x="702" y="166" width="7" height="1" fill="#00FF00"/><rect x="709" y="166" width="1" height="1" fill="#000"/><rect x="702" y="167" width="1" height="1" fill="#000"/><rect x="703" y="167" width="5" height="1" fill="#00FF00"/><rect x="708" y="167" width="1" height="1" fill="#000"/><rect x="702" y="168" width="2" height="1" fill="#000"/><rect x="704" y="168" width="3" height="1" fill="#00FF00"/><rect x="707" y="168" width="2" height="1" fill="#000"/><rect x="704" y="169" width="3" height="1" fill="#000"/><rect x="468" y="160" width="1" height="1" fill="#000"/><rect x="467" y="161" width="1" height="1" fill="#000"/><rect x="468" y="161" width="1" height="1" fill="#00FF00"/><rect x="469" y="161" width="1" height="1" fill="#000"/><rect x="467" y="162" width="1" height="1" fill="#000"/><rect x="468" y="162" width="1" height="1" fill="#00FF00"/><rect x="469" y="162" width="1" height="1" fill="#000"/><rect x="466" y="163" width="1" height="1" fill="#000"/><rect x="467" y="163" width="3" height="1" fill="#00FF00"/><rect x="470" y="163" width="1" height="1" fill="#000"/><rect x="466" y="164" width="1" height="1" fill="#000"/><rect x="467" y="164" width="3" height="1" fill="#00FF00"/><rect x="470" y="164" width="1" height="1" fill="#000"/><rect x="465" y="165" width="1" height="1" fill="#000"/><rect x="466" y="165" width="5" height="1" fill="#00FF00"/><rect x="471" y="165" width="1" height="1" fill="#000"/><rect x="465" y="166" width="1" height="1" fill="#000"/><rect x="466" y="166" width="5" height="1" fill="#00FF00"/><rect x="471" y="166" width="1" height="1" fill="#000"/><rect x="464" y="167" width="1" height="1" fill="#000"/><rect x="465" y="167" width="7" height="1" fill="#00FF00"/><rect x="472" y="167" width="1" height="1" fill="#000"/><rect x="464" y="168" width="9" height="1" fill="#000"/><rect x="501" y="173" width="1" height="1" fill="#000"/><rect x="500" y="174" width="1" height="1" fill="#000"/><rect x="501" y="174" width="1" height="1" fill="#00FF00"/><rect x="502" y="174" width="1" height="1" fill="#000"/><rect x="500" y="175" width="1" height="1" fill="#000"/><rect x="501" y="175" width="1" height="1" fill="#00FF00"/><rect x="502" y="175" width="1" height="1" fill="#000"/><rect x="499" y="176" width="1" height="1" fill="#000"/><rect x="500" y="176" width="3" height="1" fill="#00FF00"/><rect x="503" y="176" width="1" height="1" fill="#000"/><rect x="499" y="177" width="1" height="1" fill="#000"/><rect x="500" y="177" width="3" height="1" fill="#00FF00"/><rect x="503" y="177" width="1" height="1" fill="#000"/><rect x="498" y="178" width="1" height="1" fill="#000"/><rect x="499" y="178" width="5" height="1" fill="#00FF00"/><rect x="504" y="178" width="1" height="1" fill="#000"/><rect x="498" y="179" width="1" height="1" fill="#000"/><rect x="499" y="179" width="5" height="1" fill="#00FF00"/><rect x="504" y="179" width="1" height="1" fill="#000"/><rect x="497" y="180" width="1" height="1" fill="#000"/><rect x="498" y="180" width="7" height="1" fill="#00FF00"/><rect x="505" y="180" width="1" height="1" fill="#000"/><rect x="497" y="181" width="9" height="1" fill="#000"/><rect x="549" y="156" width="1" height="1" fill="#000"/><rect x="548" y="157" width="1" height="1" fill="#000"/><rect x="549" y="157" width="1" height="1" fill="#00FF00"/><rect x="550" y="157" width="1" height="1" fill="#000"/><rect x="548" y="158" width="1" height="1" fill="#000"/><rect x="549" y="158" width="1" height="1" fill="#00FF00"/><rect x="550" y="158" width="1" height="1" fill="#000"/><rect x="547" y="159" width="1" height="1" fill="#000"/><rect x="548" y="159" width="3" height="1" fill="#00FF00"/><rect x="551" y="159" width="1" height="1" fill="#000"/><rect x="547" y="160" width="1" height="1" fill="#000"/><rect x="548" y="160" width="3" height="1" fill="#00FF00"/><rect x="551" y="160" width="1" height="1" fill="#000"/><rect x="546" y="161" width="1" height="1" fill="#000"/><rect x="547" y="161" width="5" height="1" fill="#00FF00"/><rect x="552" y="161" width="1" height="1" fill="#000"/><rect x="546" y="162" width="1" height="1" fill="#000"/><rect x="547" y="162" width="5" height="1" fill="#00FF00"/><rect x="552" y="162" width="1" height="1" fill="#000"/><rect x="545" y="163" width="1" height="1" fill="#000"/><rect x="546" y="163" width="7" height="1" fill="#00FF00"/><rect x="553" y="163" width="1" height="1" fill="#000"/><rect x="545" y="164" width="9" height="1" fill="#000"/><rect x="549" y="213" width="1" height="1" fill="#000"/><rect x="548" y="214" width="1" height="1" fill="#000"/><rect x="549" y="214" width="1" height="1" fill="#00FF00"/><rect x="550" y="214" width="1" height="1" fill="#000"/><rect x="548" y="215" width="1" height="1" fill="#000"/><rect x="549" y="215" width="1" height="1" fill="#00FF00"/><rect x="550" y="215" width="1" height="1" fill="#000"/><rect x="547" y="216" width="1" height="1" fill="#000"/><rect x="548" y="216" width="3" height="1" fill="#00FF00"/><rect x="551" y="216" width="1" height="1" fill="#000"/><rect x="547" y="217" width="1" height="1" fill="#000"/><rect x="548" y="217" width="3" height="1" fill="#00FF00"/><rect x="551" y="217" width="1" height="1" fill="#000"/><rect x="546" y="218" width="1" height="1" fill="#000"/><rect x="547" y="218" width="5" height="1" fill="#00FF00"/><rect x="552" y="218" width="1" height="1" fill="#000"/><rect x="546" y="219" width="1" height="1" fill="#000"/><rect x="547" y="219" width="5" height="1" fill="#00FF00"/><rect x="552" y="219" width="1" height="1" fill="#000"/><rect x="545" y="220" width="1" height="1" fill="#000"/><rect x="546" y="220" width="7" height="1" fill="#00FF00"/><rect x="553" y="220" width="1" height="1" fill="#000"/><rect x="545" y="221" width="9" height="1" fill="#000"/><rect x="738" y="194" width="1" height="1" fill="#000"/><rect x="737" y="195" width="1" height="1" fill="#000"/><rect x="738" y="195" width="1" height="1" fill="#00FF00"/><rect x="739" y="195" width="1" height="1" fill="#000"/><rect x="737" y="196" width="1" height="1" fill="#000"/><rect x="738" y="196" width="1" height="1" fill="#00FF00"/><rect x="739" y="196" width="1" height="1" fill="#000"/><rect x="736" y="197" width="1" height="1" fill="#000"/><rect x="737" y="197" width="3" height="1" fill="#00FF00"/><rect x="740" y="197" width="1" height="1" fill="#000"/><rect x="736" y="198" width="1" height="1" fill="#000"/><rect x="737" y="198" width="3" height="1" fill="#00FF00"/><rect x="740" y="198" width="1" height="1" fill="#000"/><rect x="735" y="199" width="1" height="1" fill="#000"/><rect x="736" y="199" width="5" height="1" fill="#00FF00"/><rect x="741" y="199" width="1" height="1" fill="#000"/><rect x="735" y="200" width="1" height="1" fill="#000"/><rect x="736" y="200" width="5" height="1" fill="#00FF00"/><rect x="741" y="200" width="1" height="1" fill="#000"/><rect x="734" y="201" width="1" height="1" fill="#000"/><rect x="735" y="201" width="7" height="1" fill="#00FF00"/><rect x="742" y="201" width="1" height="1" fill="#000"/><rect x="734" y="202" width="9" height="1" fill="#000"/><rect x="62" y="139" width="3" height="1" fill="#FF0000"/><rect x="68" y="139" width="3" height="1" fill="#FF0000"/><rect x="74" y="139" width="3" height="1" fill="#FF0000"/><rect x="80" y="139" width="3" height="1" fill="#FF0000"/><rect x="86" y="139" width="3" height="1" fill="#FF0000"/><rect x="92" y="139" width="3" height="1" fill="#FF0000"/><rect x="98" y="139" width="3" height="1" fill="#FF0000"/><rect x="104" y="139" width="3" height="1" fill="#FF0000"/><rect x="110" y="139" width="3" height="1" fill="#FF0000"/><rect x="116" y="139" width="3" height="1" fill="#FF0000"/><rect x="122" y="139" width="3" height="1" fill="#FF0000"/><rect x="128" y="139" width="3" height="1" fill="#FF0000"/><rect x="134" y="139" width="3" height="1" fill="#FF0000"/><rect x="140" y="139" width="3" height="1" fill="#FF0000"/><rect x="146" y="139" width="3" height="1" fill="#FF0000"/><rect x="152" y="139" width="3" height="1" fill="#FF0000"/><rect x="158" y="139" width="3" height="1" fill="#FF0000"/><rect x="164" y="139" width="3" height="1" fill="#FF0000"/><rect x="170" y="139" width="3" height="1" fill="#FF0000"/><rect x="176" y="139" width="3" height="1" fill="#FF0000"/><rect x="182" y="139" width="3" height="1" fill="#FF0000"/><rect x="188" y="139" width="3" height="1" fill="#FF0000"/><rect x="194" y="139" width="3" height="1" fill="#FF0000"/><rect x="200" y="139" width="3" height="1" fill="#FF0000"/><rect x="206" y="139" width="3" height="1" fill="#FF0000"/><rect x="212" y="139" width="3" height="1" fill="#FF0000"/><rect x="218" y="139" width="3" height="1" fill="#FF0000"/><rect x="224" y="139" width="3" height="1" fill="#FF0000"/><rect x="230" y="139" width="3" height="1" fill="#FF0000"/><rect x="236" y="139" width="3" height="1" fill="#FF0000"/><rect x="242" y="139" width="3" height="1" fill="#FF0000"/><rect x="248" y="139" width="3" height="1" fill="#FF0000"/><rect x="254" y="139" width="3" height="1" fill="#FF0000"/><rect x="260" y="139" width="3" height="1" fill="#FF0000"/><rect x="266" y="139" width="3" height="1" fill="#FF0000"/><rect x="272" y="139" width="3" height="1" fill="#FF0000"/><rect x="278" y="139" width="3" height="1" fill="#FF0000"/><rect x="284" y="139" width="3" height="1" fill="#FF0000"/><rect x="290" y="139" width="3" height="1" fill="#FF0000"/><rect x="296" y="139" width="3" height="1" fill="#FF0000"/><rect x="302" y="139" width="3" height="1" fill="#FF0000"/><rect x="308" y="139" width="3" height="1" fill="#FF0000"/><rect x="314" y="139" width="3" height="1" fill="#FF0000"/><rect x="320" y="139" width="3" height="1" fill="#FF0000"/><rect x="326" y="139" width="3" height="1" fill="#FF0000"/><rect x="332" y="139" width="3" height="1" fill="#FF0000"/><rect x="338" y="139" width="3" height="1" fill="#FF0000"/><rect x="344" y="139" width="3" height="1" fill="#FF0000"/><rect x="350" y="139" width="3" height="1" fill="#FF0000"/><rect x="356" y="139" width="3" height="1" fill="#FF0000"/><rect x="362" y="139" width="3" height="1" fill="#FF0000"/><rect x="368" y="139" width="3" height="1" fill="#FF0000"/><rect x="374" y="139" width="3" height="1" fill="#FF0000"/><rect x="380" y="139" width="3" height="1" fill="#FF0000"/><rect x="386" y="139" width="3" height="1" fill="#FF0000"/><rect x="392" y="139" width="3" height="1" fill="#FF0000"/><rect x="398" y="139" width="3" height="1" fill="#FF0000"/><rect x="404" y="139" width="3" height="1" fill="#FF0000"/><rect x="410" y="139" width="3" height="1" fill="#FF0000"/><rect x="416" y="139" width="3" height="1" fill="#FF0000"/><rect x="422" y="139" width="3" height="1" fill="#FF0000"/><rect x="428" y="139" width="3" height="1" fill="#FF0000"/><rect x="434" y="139" width="3" height="1" fill="#FF0000"/><rect x="440" y="139" width="3" height="1" fill="#FF0000"/><rect x="446" y="139" width="3" height="1" fill="#FF0000"/><rect x="452" y="139" width="3" height="1" fill="#FF0000"/><rect x="458" y="139" width="3" height="1" fill="#FF0000"/><rect x="464" y="139" width="3" height="1" fill="#FF0000"/><rect x="470" y="139" width="3" height="1" fill="#FF0000"/><rect x="476" y="139" width="3" height="1" fill="#FF0000"/><rect x="482" y="139" width="3" height="1" fill="#FF0000"/><rect x="488" y="139" width="3" height="1" fill="#FF0000"/><rect x="494" y="139" width="3" height="1" fill="#FF0000"/><rect x="500" y="139" width="3" height="1" fill="#FF0000"/><rect x="506" y="139" width="3" height="1" fill="#FF0000"/><rect x="512" y="139" width="3" height="1" fill="#FF0000"/><rect x="518" y="139" width="3" height="1" fill="#FF0000"/><rect x="524" y="139" width="3" height="1" fill="#FF0000"/><rect x="530" y="139" width="3" height="1" fill="#FF0000"/><rect x="536" y="139" width="3" height="1" fill="#FF0000"/><rect x="542" y="139" width="3" height="1" fill="#FF0000"/><rect x="548" y="139" width="3" height="1" fill="#FF0000"/><rect x="554" y="139" width="3" height="1" fill="#FF0000"/><rect x="560" y="139" width="3" height="1" fill="#FF0000"/><rect x="566" y="139" width="3" height="1" fill="#FF0000"/><rect x="572" y="139" width="3" height="1" fill="#FF0000"/><rect x="578" y="139" width="3" height="1" fill="#FF0000"/><rect x="584" y="139" width="3" height="1" fill="#FF0000"/><rect x="590" y="139" width="3" height="1" fill="#FF0000"/><rect x="596" y="139" width="3" height="1" fill="#FF0000"/><rect x="602" y="139" width="3" height="1" fill="#FF0000"/><rect x="608" y="139" width="3" height="1" fill="#FF0000"/><rect x="614" y="139" width="3" height="1" fill="#FF0000"/><rect x="620" y="139" width="3" height="1" fill="#FF0000"/><rect x="626" y="139" width="3" height="1" fill="#FF0000"/><rect x="632" y="139" width="3" height="1" fill="#FF0000"/><rect x="638" y="139" width="3" height="1" fill="#FF0000"/><rect x="644" y="139" width="3" height="1" fill="#FF0000"/><rect x="650" y="139" width="3" height="1" fill="#FF0000"/><rect x="656" y="139" width="3" height="1" fill="#FF0000"/><rect x="662" y="139" width="3" height="1" fill="#FF0000"/><rect x="668" y="139" width="3" height="1" fill="#FF0000"/><rect x="674" y="139" width="3" height="1" fill="#FF0000"/><rect x="680" y="139" width="3" height="1" fill="#FF0000"/><rect x="686" y="139" width="3" height="1" fill="#FF0000"/><rect x="692" y="139" width="3" height="1" fill="#FF0000"/><rect x="698" y="139" width="3" height="1" fill="#FF0000"/><rect x="704" y="139" width="3" height="1" fill="#FF0000"/><rect x="710" y="139" width="3" height="1" fill="#FF0000"/><rect x="716" y="139" width="3" height="1" fill="#FF0000"/><rect x="722" y="139" width="3" height="1" fill="#FF0000"/><rect x="728" y="139" width="3" height="1" fill="#FF0000"/><rect x="734" y="139" width="3" height="1" fill="#FF0000"/><rect x="740" y="139" width="3" height="1" fill="#FF0000"/><rect x="746" y="139" width="3" height="1" fill="#FF0000"/><rect x="752" y="139" width="3" height="1" fill="#FF0000"/><rect x="758" y="139" width="3" height="1" fill="#FF0000"/><rect x="764" y="139" width="3" height="1" fill="#FF0000"/><rect x="770" y="139" width="3" height="1" fill="#FF0000"/><rect x="776" y="139" width="3" height="1" fill="#FF0000"/><rect x="782" y="139" width="3" height="1" fill="#FF0000"/><rect x="788" y="139" width="3" height="1" fill="#FF0000"/><rect x="794" y="139" width="3" height="1" fill="#FF0000"/><rect x="800" y="139" width="3" height="1" fill="#FF0000"/><rect x="806" y="139" width="3" height="1" fill="#FF0000"/><rect x="812" y="139" width="3" height="1" fill="#FF0000"/><rect x="818" y="139" width="3" height="1" fill="#FF0000"/><rect x="824" y="139" width="3" height="1" fill="#FF0000"/><rect x="830" y="139" width="3" height="1" fill="#FF0000"/><rect x="836" y="139" width="3" height="1" fill="#FF0000"/><rect x="842" y="139" width="3" height="1" fill="#FF0000"/><rect x="848" y="139" width="3" height="1" fill="#FF0000"/><rect x="854" y="139" width="3" height="1" fill="#FF0000"/><rect x="860" y="139" width="3" height="1" fill="#FF0000"/><rect x="866" y="139" width="3" height="1" fill="#FF0000"/><rect x="872" y="139" width="3" height="1" fill="#FF0000"/><rect x="878" y="139" width="3" height="1" fill="#FF0000"/><rect x="62" y="181" width="3" height="1" fill="#FF0000"/><rect x="68" y="181" width="3" height="1" fill="#FF0000"/><rect x="74" y="181" width="3" height="1" fill="#FF0000"/><rect x="80" y="181" width="3" height="1" fill="#FF0000"/><rect x="86" y="181" width="3" height="1" fill="#FF0000"/><rect x="92" y="181" width="3" height="1" fill="#FF0000"/><rect x="98" y="181" width="3" height="1" fill="#FF0000"/><rect x="104" y="181" width="3" height="1" fill="#FF0000"/><rect x="110" y="181" width="3" height="1" fill="#FF0000"/><rect x="116" y="181" width="3" height="1" fill="#FF0000"/><rect x="122" y="181" width="3" height="1" fill="#FF0000"/><rect x="128" y="181" width="3" height="1" fill="#FF0000"/><rect x="134" y="181" width="3" height="1" fill="#FF0000"/><rect x="140" y="181" width="3" height="1" fill="#FF0000"/><rect x="146" y="181" width="3" height="1" fill="#FF0000"/><rect x="152" y="181" width="3" height="1" fill="#FF0000"/><rect x="158" y="181" width="3" height="1" fill="#FF0000"/><rect x="164" y="181" width="3" height="1" fill="#FF0000"/><rect x="170" y="181" width="3" height="1" fill="#FF0000"/><rect x="176" y="181" width="3" height="1" fill="#FF0000"/><rect x="182" y="181" width="3" height="1" fill="#FF0000"/><rect x="188" y="181" width="3" height="1" fill="#FF0000"/><rect x="194" y="181" width="3" height="1" fill="#FF0000"/><rect x="200" y="181" width="3" height="1" fill="#FF0000"/><rect x="206" y="181" width="3" height="1" fill="#FF0000"/><rect x="212" y="181" width="3" height="1" fill="#FF0000"/><rect x="218" y="181" width="3" height="1" fill="#FF0000"/><rect x="224" y="181" width="3" height="1" fill="#FF0000"/><rect x="230" y="181" width="3" height="1" fill="#FF0000"/><rect x="236" y="181" width="3" height="1" fill="#FF0000"/><rect x="242" y="181" width="3" height="1" fill="#FF0000"/><rect x="248" y="181" width="3" height="1" fill="#FF0000"/><rect x="254" y="181" width="3" height="1" fill="#FF0000"/><rect x="260" y="181" width="3" height="1" fill="#FF0000"/><rect x="266" y="181" width="3" height="1" fill="#FF0000"/><rect x="272" y="181" width="3" height="1" fill="#FF0000"/><rect x="278" y="181" width="3" height="1" fill="#FF0000"/><rect x="284" y="181" width="3" height="1" fill="#FF0000"/><rect x="290" y="181" width="3" height="1" fill="#FF0000"/><rect x="296" y="181" width="3" height="1" fill="#FF0000"/><rect x="302" y="181" width="3" height="1" fill="#FF0000"/><rect x="308" y="181" width="3" height="1" fill="#FF0000"/><rect x="314" y="181" width="3" height="1" fill="#FF0000"/><rect x="320" y="181" width="3" height="1" fill="#FF0000"/><rect x="326" y="181" width="3" height="1" fill="#FF0000"/><rect x="332" y="181" width="3" height="1" fill="#FF0000"/><rect x="338" y="181" width="3" height="1" fill="#FF0000"/><rect x="344" y="181" width="3" height="1" fill="#FF0000"/><rect x="350" y="181" width="3" height="1" fill="#FF0000"/><rect x="356" y="181" width="3" height="1" fill="#FF0000"/><rect x="362" y="181" width="3" height="1" fill="#FF0000"/><rect x="368" y="181" width="3" height="1" fill="#FF0000"/><rect x="374" y="181" width="3" height="1" fill="#FF0000"/><rect x="380" y="181" width="3" height="1" fill="#FF0000"/><rect x="386" y="181" width="3" height="1" fill="#FF0000"/><rect x="392" y="181" width="3" height="1" fill="#FF0000"/><rect x="398" y="181" width="3" height="1" fill="#FF0000"/><rect x="404" y="181" width="3" height="1" fill="#FF0000"/><rect x="410" y="181" width="3" height="1" fill="#FF0000"/><rect x="416" y="181" width="3" height="1" fill="#FF0000"/><rect x="422" y="181" width="3" height="1" fill="#FF0000"/><rect x="428" y="181" width="3" height="1" fill="#FF0000"/><rect x="434" y="181" width="3" height="1" fill="#FF0000"/><rect x="440" y="181" width="3" height="1" fill="#FF0000"/><rect x="446" y="181" width="3" height="1" fill="#FF0000"/><rect x="452" y="181" width="3" height="1" fill="#FF0000"/><rect x="458" y="181" width="3" height="1" fill="#FF0000"/><rect x="464" y="181" width="3" height="1" fill="#FF0000"/><rect x="470" y="181" width="3" height="1" fill="#FF0000"/><rect x="476" y="181" width="3" height="1" fill="#FF0000"/><rect x="482" y="181" width="3" height="1" fill="#FF0000"/><rect x="488" y="181" width="3" height="1" fill="#FF0000"/><rect x="494" y="181" width="3" height="1" fill="#FF0000"/><rect x="500" y="181" width="3" height="1" fill="#FF0000"/><rect x="506" y="181" width="3" height="1" fill="#FF0000"/><rect x="512" y="181" width="3" height="1" fill="#FF0000"/><rect x="518" y="181" width="3" height="1" fill="#FF0000"/><rect x="524" y="181" width="3" height="1" fill="#FF0000"/><rect x="530" y="181" width="3" height="1" fill="#FF0000"/><rect x="536" y="181" width="3" height="1" fill="#FF0000"/><rect x="542" y="181" width="3" height="1" fill="#FF0000"/><rect x="548" y="181" width="3" height="1" fill="#FF0000"/><rect x="554" y="181" width="3" height="1" fill="#FF0000"/><rect x="560" y="181" width="3" height="1" fill="#FF0000"/><rect x="566" y="181" width="3" height="1" fill="#FF0000"/><rect x="572" y="181" width="3" height="1" fill="#FF0000"/><rect x="578" y="181" width="3" height="1" fill="#FF0000"/><rect x="584" y="181" width="3" height="1" fill="#FF0000"/><rect x="590" y="181" width="3" height="1" fill="#FF0000"/><rect x="596" y="181" width="3" height="1" fill="#FF0000"/><rect x="602" y="181" width="3" height="1" fill="#FF0000"/><rect x="608" y="181" width="3" height="1" fill="#FF0000"/><rect x="614" y="181" width="3" height="1" fill="#FF0000"/><rect x="620" y="181" width="3" height="1" fill="#FF0000"/><rect x="626" y="181" width="3" height="1" fill="#FF0000"/><rect x="632" y="181" width="3" height="1" fill="#FF0000"/><rect x="638" y="181" width="3" height="1" fill="#FF0000"/><rect x="644" y="181" width="3" height="1" fill="#FF0000"/><rect x="650" y="181" width="3" height="1" fill="#FF0000"/><rect x="656" y="181" width="3" height="1" fill="#FF0000"/><rect x="662" y="181" width="3" height="1" fill="#FF0000"/><rect x="668" y="181" width="3" height="1" fill="#FF0000"/><rect x="674" y="181" width="3" height="1" fill="#FF0000"/><rect x="680" y="181" width="3" height="1" fill="#FF0000"/><rect x="686" y="181" width="3" height="1" fill="#FF0000"/><rect x="692" y="181" width="3" height="1" fill="#FF0000"/><rect x="698" y="181" width="3" height="1" fill="#FF0000"/><rect x="704" y="181" width="3" height="1" fill="#FF0000"/><rect x="710" y="181" width="3" height="1" fill="#FF0000"/><rect x="716" y="181" width="3" height="1" fill="#FF0000"/><rect x="722" y="181" width="3" height="1" fill="#FF0000"/><rect x="728" y="181" width="3" height="1" fill="#FF0000"/><rect x="734" y="181" width="3" height="1" fill="#FF0000"/><rect x="740" y="181" width="3" height="1" fill="#FF0000"/><rect x="746" y="181" width="3" height="1" fill="#FF0000"/><rect x="752" y="181" width="3" height="1" fill="#FF0000"/><rect x="758" y="181" width="3" height="1" fill="#FF0000"/><rect x="764" y="181" width="3" height="1" fill="#FF0000"/><rect x="770" y="181" width="3" height="1" fill="#FF0000"/><rect x="776" y="181" width="3" height="1" fill="#FF0000"/><rect x="782" y="181" width="3" height="1" fill="#FF0000"/><rect x="788" y="181" width="3" height="1" fill="#FF0000"/><rect x="794" y="181" width="3" height="1" fill="#FF0000"/><rect x="800" y="181" width="3" height="1" fill="#FF0000"/><rect x="806" y="181" width="3" height="1" fill="#FF0000"/><rect x="812" y="181" width="3" height="1" fill="#FF0000"/><rect x="818" y="181" width="3" height="1" fill="#FF0000"/><rect x="824" y="181" width="3" height="1" fill="#FF0000"/><rect x="830" y="181" width="3" height="1" fill="#FF0000"/><rect x="836" y="181" width="3" height="1" fill="#FF0000"/><rect x="842" y="181" width="3" height="1" fill="#FF0000"/><rect x="848" y="181" width="3" height="1" fill="#FF0000"/><rect x="854" y="181" width="3" height="1" fill="#FF0000"/><rect x="860" y="181" width="3" height="1" fill="#FF0000"/><rect x="866" y="181" width="3" height="1" fill="#FF0000"/><rect x="872" y="181" width="3" height="1" fill="#FF0000"/><rect x="878" y="181" width="3" height="1" fill="#FF0000"/><rect x="62" y="222" width="3" height="1" fill="#FF0000"/><rect x="68" y="222" width="3" height="1" fill="#FF0000"/><rect x="74" y="222" width="3" height="1" fill="#FF0000"/><rect x="80" y="222" width="3" height="1" fill="#FF0000"/><rect x="86" y="222" width="3" height="1" fill="#FF0000"/><rect x="92" y="222" width="3" height="1" fill="#FF0000"/><rect x="98" y="222" width="3" height="1" fill="#FF0000"/><rect x="104" y="222" width="3" height="1" fill="#FF0000"/><rect x="110" y="222" width="3" height="1" fill="#FF0000"/><rect x="116" y="222" width="3" height="1" fill="#FF0000"/><rect x="122" y="222" width="3" height="1" fill="#FF0000"/><rect x="128" y="222" width="3" height="1" fill="#FF0000"/><rect x="134" y="222" width="3" height="1" fill="#FF0000"/><rect x="140" y="222" width="3" height="1" fill="#FF0000"/><rect x="146" y="222" width="3" height="1" fill="#FF0000"/><rect x="152" y="222" width="3" height="1" fill="#FF0000"/><rect x="158" y="222" width="3" height="1" fill="#FF0000"/><rect x="164" y="222" width="3" height="1" fill="#FF0000"/><rect x="170" y="222" width="3" height="1" fill="#FF0000"/><rect x="176" y="222" width="3" height="1" fill="#FF0000"/><rect x="182" y="222" width="3" height="1" fill="#FF0000"/><rect x="188" y="222" width="3" height="1" fill="#FF0000"/><rect x="194" y="222" width="3" height="1" fill="#FF0000"/><rect x="200" y="222" width="3" height="1" fill="#FF0000"/><rect x="206" y="222" width="3" height="1" fill="#FF0000"/><rect x="212" y="222" width="3" height="1" fill="#FF0000"/><rect x="218" y="222" width="3" height="1" fill="#FF0000"/><rect x="224" y="222" width="3" height="1" fill="#FF0000"/><rect x="230" y="222" width="3" height="1" fill="#FF0000"/><rect x="236" y="222" width="3" height="1" fill="#FF0000"/><rect x="242" y="222" width="3" height="1" fill="#FF0000"/><rect x="248" y="222" width="3" height="1" fill="#FF0000"/><rect x="254" y="222" width="3" height="1" fill="#FF0000"/><rect x="260" y="222" width="3" height="1" fill="#FF0000"/><rect x="266" y="222" width="3" height="1" fill="#FF0000"/><rect x="272" y="222" width="3" height="1" fill="#FF0000"/><rect x="278" y="222" width="3" height="1" fill="#FF0000"/><rect x="284" y="222" width="3" height="1" fill="#FF0000"/><rect x="290" y="222" width="3" height="1" fill="#FF0000"/><rect x="296" y="222" width="3" height="1" fill="#FF0000"/><rect x="302" y="222" width="3" height="1" fill="#FF0000"/><rect x="308" y="222" width="3" height="1" fill="#FF0000"/><rect x="314" y="222" width="3" height="1" fill="#FF0000"/><rect x="320" y="222" width="3" height="1" fill="#FF0000"/><rect x="326" y="222" width="3" height="1" fill="#FF0000"/><rect x="332" y="222" width="3" height="1" fill="#FF0000"/><rect x="338" y="222" width="3" height="1" fill="#FF0000"/><rect x="344" y="222" width="3" height="1" fill="#FF0000"/><rect x="350" y="222" width="3" height="1" fill="#FF0000"/><rect x="356" y="222" width="3" height="1" fill="#FF0000"/><rect x="362" y="222" width="3" height="1" fill="#FF0000"/><rect x="368" y="222" width="3" height="1" fill="#FF0000"/><rect x="374" y="222" width="3" height="1" fill="#FF0000"/><rect x="380" y="222" width="3" height="1" fill="#FF0000"/><rect x="386" y="222" width="3" height="1" fill="#FF0000"/><rect x="392" y="222" width="3" height="1" fill="#FF0000"/><rect x="398" y="222" width="3" height="1" fill="#FF0000"/><rect x="404" y="222" width="3" height="1" fill="#FF0000"/><rect x="410" y="222" width="3" height="1" fill="#FF0000"/><rect x="416" y="222" width="3" height="1" fill="#FF0000"/><rect x="422" y="222" width="3" height="1" fill="#FF0000"/><rect x="428" y="222" width="3" height="1" fill="#FF0000"/><rect x="434" y="222" width="3" height="1" fill="#FF0000"/><rect x="440" y="222" width="3" height="1" fill="#FF0000"/><rect x="446" y="222" width="3" height="1" fill="#FF0000"/><rect x="452" y="222" width="3" height="1" fill="#FF0000"/><rect x="458" y="222" width="3" height="1" fill="#FF0000"/><rect x="464" y="222" width="3" height="1" fill="#FF0000"/><rect x="470" y="222" width="3" height="1" fill="#FF0000"/><rect x="476" y="222" width="3" height="1" fill="#FF0000"/><rect x="482" y="222" width="3" height="1" fill="#FF0000"/><rect x="488" y="222" width="3" height="1" fill="#FF0000"/><rect x="494" y="222" width="3" height="1" fill="#FF0000"/><rect x="500" y="222" width="3" height="1" fill="#FF0000"/><rect x="506" y="222" width="3" height="1" fill="#FF0000"/><rect x="512" y="222" width="3" height="1" fill="#FF0000"/><rect x="518" y="222" width="3" height="1" fill="#FF0000"/><rect x="524" y="222" width="3" height="1" fill="#FF0000"/><rect x="530" y="222" width="3" height="1" fill="#FF0000"/><rect x="536" y="222" width="3" height="1" fill="#FF0000"/><rect x="542" y="222" width="3" height="1" fill="#FF0000"/><rect x="548" y="222" width="3" height="1" fill="#FF0000"/><rect x="554" y="222" width="3" height="1" fill="#FF0000"/><rect x="560" y="222" width="3" height="1" fill="#FF0000"/><rect x="566" y="222" width="3" height="1" fill="#FF0000"/><rect x="572" y="222" width="3" height="1" fill="#FF0000"/><rect x="578" y="222" width="3" height="1" fill="#FF0000"/><rect x="584" y="222" width="3" height="1" fill="#FF0000"/><rect x="590" y="222" width="3" height="1" fill="#FF0000"/><rect x="596" y="222" width="3" height="1" fill="#FF0000"/><rect x="602" y="222" width="3" height="1" fill="#FF0000"/><rect x="608" y="222" width="3" height="1" fill="#FF0000"/><rect x="614" y="222" width="3" height="1" fill="#FF0000"/><rect x="620" y="222" width="3" height="1" fill="#FF0000"/><rect x="626" y="222" width="3" height="1" fill="#FF0000"/><rect x="632" y="222" width="3" height="1" fill="#FF0000"/><rect x="638" y="222" width="3" height="1" fill="#FF0000"/><rect x="644" y="222" width="3" height="1" fill="#FF0000"/><rect x="650" y="222" width="3" height="1" fill="#FF0000"/><rect x="656" y="222" width="3" height="1" fill="#FF0000"/><rect x="662" y="222" width="3" height="1" fill="#FF0000"/><rect x="668" y="222" width="3" height="1" fill="#FF0000"/><rect x="674" y="222" width="3" height="1" fill="#FF0000"/><rect x="680" y="222" width="3" height="1" fill="#FF0000"/><rect x="686" y="222" width="3" height="1" fill="#FF0000"/><rect x="692" y="222" width="3" height="1" fill="#FF0000"/><rect x="698" y="222" width="3" height="1" fill="#FF0000"/><rect x="704" y="222" width="3" height="1" fill="#FF0000"/><rect x="710" y="222" width="3" height="1" fill="#FF0000"/><rect x="716" y="222" width="3" height="1" fill="#FF0000"/><rect x="722" y="222" width="3" height="1" fill="#FF0000"/><rect x="728" y="222" width="3" height="1" fill="#FF0000"/><rect x="734" y="222" width="3" height="1" fill="#FF0000"/><rect x="740" y="222" width="3" height="1" fill="#FF0000"/><rect x="746" y="222" width="3" height="1" fill="#FF0000"/><rect x="752" y="222" width="3" height="1" fill="#FF0000"/><rect x="758" y="222" width="3" height="1" fill="#FF0000"/><rect x="764" y="222" width="3" height="1" fill="#FF0000"/><rect x="770" y="222" width="3" height="1" fill="#FF0000"/><rect x="776" y="222" width="3" height="1" fill="#FF0000"/><rect x="782" y="222" width="3" height="1" fill="#FF0000"/><rect x="788" y="222" width="3" height="1" fill="#FF0000"/><rect x="794" y="222" width="3" height="1" fill="#FF0000"/><rect x="800" y="222" width="3" height="1" fill="#FF0000"/><rect x="806" y="222" width="3" height="1" fill="#FF0000"/><rect x="812" y="222" width="3" height="1" fill="#FF0000"/><rect x="818" y="222" width="3" height="1" fill="#FF0000"/><rect x="824" y="222" width="3" height="1" fill="#FF0000"/><rect x="830" y="222" width="3" height="1" fill="#FF0000"/><rect x="836" y="222" width="3" height="1" fill="#FF0000"/><rect x="842" y="222" width="3" height="1" fill="#FF0000"/><rect x="848" y="222" width="3" height="1" fill="#FF0000"/><rect x="854" y="222" width="3" height="1" fill="#FF0000"/><rect x="860" y="222" width="3" height="1" fill="#FF0000"/><rect x="866" y="222" width="3" height="1" fill="#FF0000"/><rect x="872" y="222" width="3" height="1" fill="#FF0000"/><rect x="878" y="222" width="3" height="1" fill="#FF0000"/></svg>
<div class="t" style="left:149.00px;top:76px;font-size:13px;line-height:13px;color:#000;transform:scaleX(0.9891);transform-origin:0 0;">Test Name = T3</div>
<div class="t" style="left:257.00px;top:76px;font-size:13px;line-height:13px;color:#000;transform:scaleX(0.9866);transform-origin:0 0;">Control Name = BIO-RAD</div>
<div class="t" style="left:418.00px;top:76px;font-size:13px;line-height:13px;color:#000;transform:scaleX(0.9840);transform-origin:0 0;">Control Lot # = 40130</div>
<div class="t" style="left:555.00px;top:76px;font-size:13px;line-height:13px;color:#000;transform:scaleX(0.9495);transform-origin:0 0;">Control Level = 1</div>
<div class="t" style="left:691.00px;top:76px;font-size:13px;line-height:13px;color:#000;transform:scaleX(0.9692);transform-origin:0 0;">04/02/2003</div>
<div class="t" style="left:37.00px;top:95px;font-size:11px;line-height:11px;color:#000;">113</div>
<div class="t" style="left:37.00px;top:116px;font-size:11px;line-height:11px;color:#000;">104</div>
<div class="t" style="left:34.00px;top:136px;font-size:11px;line-height:11px;color:#000;">94.0</div>
<div class="t" style="left:34.00px;top:156px;font-size:11px;line-height:11px;color:#000;">84.5</div>
<div class="t" style="left:34.00px;top:176px;font-size:11px;line-height:11px;color:#000;">75.0</div>
<div class="t" style="left:34.00px;top:197px;font-size:11px;line-height:11px;color:#000;">65.5</div>
<div class="t" style="left:34.00px;top:217px;font-size:11px;line-height:11px;color:#000;">56.0</div>
<div class="t" style="left:34.00px;top:237px;font-size:11px;line-height:11px;color:#000;">46.5</div>
<div class="t" style="left:34.00px;top:257px;font-size:11px;line-height:11px;color:#000;">37.0</div>
<div class="t" style="left:49.00px;top:270px;font-size:11px;line-height:11px;color:#000;transform:scaleX(0.9286);transform-origin:0 0;">12/02</div>
<div class="t" style="left:130.00px;top:270px;font-size:11px;line-height:11px;color:#000;transform:scaleX(0.9286);transform-origin:0 0;">12/14</div>
<div class="t" style="left:211.00px;top:270px;font-size:11px;line-height:11px;color:#000;transform:scaleX(0.9286);transform-origin:0 0;">12/26</div>
<div class="t" style="left:292.00px;top:270px;font-size:11px;line-height:11px;color:#000;transform:scaleX(0.9286);transform-origin:0 0;">01/07</div>
<div class="t" style="left:373.00px;top:270px;font-size:11px;line-height:11px;color:#000;transform:scaleX(0.9286);transform-origin:0 0;">01/19</div>
<div class="t" style="left:455.00px;top:270px;font-size:11px;line-height:11px;color:#000;transform:scaleX(0.9286);transform-origin:0 0;">01/31</div>
<div class="t" style="left:536.00px;top:270px;font-size:11px;line-height:11px;color:#000;transform:scaleX(0.9286);transform-origin:0 0;">02/12</div>
<div class="t" style="left:617.00px;top:270px;font-size:11px;line-height:11px;color:#000;transform:scaleX(0.9286);transform-origin:0 0;">02/24</div>
<div class="t" style="left:698.00px;top:270px;font-size:11px;line-height:11px;color:#000;transform:scaleX(0.9286);transform-origin:0 0;">03/08</div>
<div class="t" style="left:780.00px;top:270px;font-size:11px;line-height:11px;color:#000;transform:scaleX(0.9286);transform-origin:0 0;">03/20</div>
<div class="t" style="left:861.00px;top:270px;font-size:11px;line-height:11px;color:#000;transform:scaleX(0.9286);transform-origin:0 0;">04/01</div>
<div class="t" style="left:66.00px;top:124px;font-size:13px;line-height:13px;color:#000;transform:scaleX(0.9655);transform-origin:0 0;">High Limit</div>
<div class="t" style="left:66.00px;top:166px;font-size:13px;line-height:13px;color:#000;transform:scaleX(0.9861);transform-origin:0 0;">Target Mean</div>
<div class="t" style="left:66.00px;top:208px;font-size:13px;line-height:13px;color:#000;">Low Limit</div>
<div class="t" style="left:439.00px;top:287px;font-size:13px;line-height:13px;color:#000;transform:scaleX(0.9259);transform-origin:0 0;">Date</div>
<div class="t" style="left:15px;top:188px;width:0;height:0;"><div style="position:absolute;left:0;top:0;font-size:13px;line-height:13px;white-space:pre;transform:translate(-50%,-50%) rotate(-90deg) scaleX(0.9625);">Result:  ng/dL</div></div>
<div class="r" style="left:2px;top:314px;width:137px;height:259px;background:#0000FF;box-sizing:border-box;border:1px solid #000;"></div>
<div class="t" style="left:10.00px;top:335px;font-size:14px;line-height:14px;color:#00FF00;font-weight:bold;transform:scaleX(1.0952);transform-origin:0 0;text-decoration:underline;text-decoration-skip-ink:none;">Target</div>
<div class="t" style="left:39.00px;top:362px;font-size:14px;line-height:14px;color:#00FF00;font-weight:bold;transform:scaleX(0.9722);transform-origin:0 0;">Mean</div>
<div class="t" style="left:53.00px;top:383px;font-size:14px;line-height:14px;color:#00FF00;font-weight:bold;transform:scaleX(1.0526);transform-origin:0 0;">SD</div>
<div class="t" style="left:10.00px;top:420px;font-size:14px;line-height:14px;color:#00FFFF;font-weight:bold;transform:scaleX(0.9767);transform-origin:0 0;text-decoration:underline;text-decoration-skip-ink:none;">Actual</div>
<div class="t" style="left:39.00px;top:439px;font-size:14px;line-height:14px;color:#00FFFF;font-weight:bold;">Mean</div>
<div class="t" style="left:57.00px;top:461px;font-size:14px;line-height:14px;color:#00FFFF;font-weight:bold;transform:scaleX(1.0526);transform-origin:0 0;">SD</div>
<div class="t" style="left:30.00px;top:482px;font-size:14px;line-height:14px;color:#00FFFF;font-weight:bold;">CV (%)</div>
<div class="t" style="left:68.00px;top:506px;font-size:14px;line-height:14px;color:#00FFFF;font-weight:bold;">n</div>
<div class="r" style="left:80px;top:358px;width:57px;height:21px;background:#fff;box-sizing:border-box;border:1px solid #000;"></div>
<div class="t" style="left:82.00px;top:360px;font-size:14px;line-height:14px;color:#000;font-weight:bold;">75.0</div>
<div class="r" style="left:80px;top:380px;width:57px;height:21px;background:#fff;box-sizing:border-box;border:1px solid #000;"></div>
<div class="t" style="left:82.00px;top:382px;font-size:14px;line-height:14px;color:#000;font-weight:bold;">9.50</div>
<div class="r" style="left:80px;top:436px;width:57px;height:21px;background:#fff;box-sizing:border-box;border:1px solid #000;"></div>
<div class="t" style="left:82.00px;top:438px;font-size:14px;line-height:14px;color:#000;font-weight:bold;">83.8</div>
<div class="r" style="left:80px;top:458px;width:57px;height:21px;background:#fff;box-sizing:border-box;border:1px solid #000;"></div>
<div class="t" style="left:82.00px;top:460px;font-size:14px;line-height:14px;color:#000;font-weight:bold;">17.7</div>
<div class="r" style="left:80px;top:480px;width:57px;height:21px;background:#fff;box-sizing:border-box;border:1px solid #000;"></div>
<div class="t" style="left:82.00px;top:482px;font-size:14px;line-height:14px;color:#000;font-weight:bold;">21.14</div>
<div class="r" style="left:80px;top:502px;width:57px;height:21px;background:#fff;box-sizing:border-box;border:1px solid #000;"></div>
<div class="t" style="left:82.00px;top:504px;font-size:14px;line-height:14px;color:#000;font-weight:bold;">17</div>
<div class="r" style="left:142px;top:314px;width:761px;height:259px;background:#fff;box-sizing:border-box;border:1px solid #000;"></div>
<div class="r" style="left:143px;top:315px;width:743px;height:26px;background:#FFFF00;"></div>
<div class="r" style="left:143px;top:341px;width:743px;height:1px;background:#000;"></div>
<div class="r" style="left:155px;top:315px;width:1px;height:26px;background:#000;"></div>
<div class="r" style="left:285px;top:315px;width:1px;height:26px;background:#000;"></div>
<div class="r" style="left:348px;top:315px;width:1px;height:26px;background:#000;"></div>
<div class="r" style="left:398px;top:315px;width:1px;height:26px;background:#000;"></div>
<div class="r" style="left:445px;top:315px;width:1px;height:26px;background:#000;"></div>
<div class="r" style="left:498px;top:315px;width:1px;height:26px;background:#000;"></div>
<div class="r" style="left:628px;top:315px;width:1px;height:26px;background:#000;"></div>
<div class="r" style="left:705px;top:315px;width:1px;height:26px;background:#000;"></div>
<div class="t" style="left:159.00px;top:323px;font-size:12px;line-height:12px;color:#000;font-weight:bold;">Date &amp; Time Resulted</div>
<div class="t" style="left:289.00px;top:323px;font-size:12px;line-height:12px;color:#000;font-weight:bold;">Result</div>
<div class="t" style="left:352.00px;top:323px;font-size:12px;line-height:12px;color:#000;font-weight:bold;">Z</div>
<div class="t" style="left:402.00px;top:323px;font-size:12px;line-height:12px;color:#000;font-weight:bold;">Kit Lot</div>
<div class="t" style="left:449.00px;top:323px;font-size:12px;line-height:12px;color:#000;font-weight:bold;">Agn Lot</div>
<div class="t" style="left:502.00px;top:323px;font-size:12px;line-height:12px;color:#000;font-weight:bold;">Date &amp; Time Adjusted</div>
<div class="t" style="left:632.00px;top:323px;font-size:12px;line-height:12px;color:#000;font-weight:bold;">Operator ID</div>
<div class="t" style="left:709.00px;top:323px;font-size:12px;line-height:12px;color:#000;font-weight:bold;transform:scaleX(0.9273);transform-origin:0 0;">Comment</div>
<div class="r" style="left:143px;top:342px;width:743px;height:229px;overflow:hidden;">
<div class="r" style="left:0px;top:15px;width:743px;height:1px;background:#C0C0C0;"></div>
<div class="r" style="left:3px;top:8px;width:6px;height:1px;background:#000;"></div>
<div class="r" style="left:5px;top:6px;width:2px;height:5px;background:#000;"></div>
<div class="t" style="left:25.00px;top:1px;font-size:13px;line-height:13px;color:#000;font-weight:bold;transform:scaleX(1.0175);transform-origin:0 0;">01/03/2003 09:33 a</div>
<div class="t" style="left:176.00px;top:1px;font-size:13px;line-height:13px;color:#000;font-weight:bold;">98.1</div>
<div class="t" style="left:227.00px;top:1px;font-size:13px;line-height:13px;color:#000;font-weight:bold;">2.44</div>
<div class="t" style="left:277.00px;top:1px;font-size:13px;line-height:13px;color:#000;font-weight:bold;">224</div>
<div class="t" style="left:346.00px;top:1px;font-size:13px;line-height:13px;color:#000;font-weight:bold;">0</div>
<div class="t" style="left:368.00px;top:1px;font-size:13px;line-height:13px;color:#000;font-weight:bold;transform:scaleX(1.0088);transform-origin:0 0;">01/03/2003 09:21 a</div>
<div class="r" style="left:711px;top:8px;width:3px;height:1px;background:#000;"></div>
<div class="r" style="left:715px;top:8px;width:3px;height:1px;background:#000;"></div>
<div class="r" style="left:719px;top:8px;width:3px;height:1px;background:#000;"></div>
<div class="r" style="left:723px;top:8px;width:3px;height:1px;background:#000;"></div>
<div class="r" style="left:727px;top:8px;width:3px;height:1px;background:#000;"></div>
<div class="r" style="left:731px;top:8px;width:3px;height:1px;background:#000;"></div>
<div class="r" style="left:735px;top:8px;width:3px;height:1px;background:#000;"></div>
<div class="r" style="left:739px;top:8px;width:3px;height:1px;background:#000;"></div>
<div class="r" style="left:0px;top:31px;width:743px;height:1px;background:#C0C0C0;"></div>
<div class="r" style="left:3px;top:24px;width:6px;height:1px;background:#000;"></div>
<div class="r" style="left:5px;top:22px;width:2px;height:5px;background:#000;"></div>
<div class="t" style="left:25.00px;top:17px;font-size:13px;line-height:13px;color:#000;font-weight:bold;transform:scaleX(1.0175);transform-origin:0 0;">01/10/2003 10:05 a</div>
<div class="t" style="left:175.00px;top:17px;font-size:13px;line-height:13px;color:#000;font-weight:bold;">37.4</div>
<div class="t" style="left:223.00px;top:17px;font-size:13px;line-height:13px;color:#000;font-weight:bold;">-3.96</div>
<div class="t" style="left:277.00px;top:17px;font-size:13px;line-height:13px;color:#000;font-weight:bold;">224</div>
<div class="t" style="left:346.00px;top:17px;font-size:13px;line-height:13px;color:#000;font-weight:bold;">0</div>
<div class="t" style="left:368.00px;top:17px;font-size:13px;line-height:13px;color:#000;font-weight:bold;transform:scaleX(1.0088);transform-origin:0 0;">01/03/2003 09:21 a</div>
<div class="r" style="left:711px;top:24px;width:3px;height:1px;background:#000;"></div>
<div class="r" style="left:715px;top:24px;width:3px;height:1px;background:#000;"></div>
<div class="r" style="left:719px;top:24px;width:3px;height:1px;background:#000;"></div>
<div class="r" style="left:723px;top:24px;width:3px;height:1px;background:#000;"></div>
<div class="r" style="left:727px;top:24px;width:3px;height:1px;background:#000;"></div>
<div class="r" style="left:731px;top:24px;width:3px;height:1px;background:#000;"></div>
<div class="r" style="left:735px;top:24px;width:3px;height:1px;background:#000;"></div>
<div class="r" style="left:739px;top:24px;width:3px;height:1px;background:#000;"></div>
<div class="r" style="left:13px;top:32px;width:730px;height:15px;background:#FFAAAA;"></div>
<div class="r" style="left:0px;top:47px;width:743px;height:1px;background:#C0C0C0;"></div>
<div class="r" style="left:6px;top:40px;width:3px;height:1px;background:#000;"></div>
<div class="t" style="left:25.00px;top:33px;font-size:13px;line-height:13px;color:#000;font-weight:bold;transform:scaleX(1.0175);transform-origin:0 0;">01/13/2003 12:17 p</div>
<div class="t" style="left:179.00px;top:33px;font-size:13px;line-height:13px;color:#000;font-weight:bold;">125</div>
<div class="t" style="left:228.00px;top:33px;font-size:13px;line-height:13px;color:#000;font-weight:bold;">5.23</div>
<div class="t" style="left:277.00px;top:33px;font-size:13px;line-height:13px;color:#000;font-weight:bold;">224</div>
<div class="t" style="left:346.00px;top:33px;font-size:13px;line-height:13px;color:#000;font-weight:bold;">0</div>
<div class="t" style="left:368.00px;top:33px;font-size:13px;line-height:13px;color:#000;font-weight:bold;transform:scaleX(1.0088);transform-origin:0 0;">01/03/2003 09:21 a</div>
<div class="r" style="left:711px;top:40px;width:3px;height:1px;background:#000;"></div>
<div class="r" style="left:715px;top:40px;width:3px;height:1px;background:#000;"></div>
<div class="r" style="left:719px;top:40px;width:3px;height:1px;background:#000;"></div>
<div class="r" style="left:723px;top:40px;width:3px;height:1px;background:#000;"></div>
<div class="r" style="left:727px;top:40px;width:3px;height:1px;background:#000;"></div>
<div class="r" style="left:731px;top:40px;width:3px;height:1px;background:#000;"></div>
<div class="r" style="left:735px;top:40px;width:3px;height:1px;background:#000;"></div>
<div class="r" style="left:739px;top:40px;width:3px;height:1px;background:#000;"></div>
<div class="r" style="left:13px;top:48px;width:730px;height:15px;background:#FF0000;"></div>
<div class="r" style="left:0px;top:63px;width:743px;height:1px;background:#C0C0C0;"></div>
<div class="r" style="left:3px;top:56px;width:6px;height:1px;background:#000;"></div>
<div class="r" style="left:5px;top:54px;width:2px;height:5px;background:#000;"></div>
<div class="t" style="left:25.00px;top:49px;font-size:13px;line-height:13px;color:#000;font-weight:bold;transform:scaleX(1.0175);transform-origin:0 0;">01/13/2003 01:27 p</div>
<div class="t" style="left:176.00px;top:49px;font-size:13px;line-height:13px;color:#000;font-weight:bold;">91.9</div>
<div class="t" style="left:228.00px;top:49px;font-size:13px;line-height:13px;color:#000;font-weight:bold;">1.78</div>
<div class="t" style="left:277.00px;top:49px;font-size:13px;line-height:13px;color:#000;font-weight:bold;">224</div>
<div class="t" style="left:346.00px;top:49px;font-size:13px;line-height:13px;color:#000;font-weight:bold;">0</div>
<div class="t" style="left:368.00px;top:49px;font-size:13px;line-height:13px;color:#000;font-weight:bold;transform:scaleX(1.0088);transform-origin:0 0;">01/03/2003 09:21 a</div>
<div class="r" style="left:711px;top:56px;width:3px;height:1px;background:#000;"></div>
<div class="r" style="left:715px;top:56px;width:3px;height:1px;background:#000;"></div>
<div class="r" style="left:719px;top:56px;width:3px;height:1px;background:#000;"></div>
<div class="r" style="left:723px;top:56px;width:3px;height:1px;background:#000;"></div>
<div class="r" style="left:727px;top:56px;width:3px;height:1px;background:#000;"></div>
<div class="r" style="left:731px;top:56px;width:3px;height:1px;background:#000;"></div>
<div class="r" style="left:735px;top:56px;width:3px;height:1px;background:#000;"></div>
<div class="r" style="left:739px;top:56px;width:3px;height:1px;background:#000;"></div>
<div class="r" style="left:13px;top:64px;width:730px;height:15px;background:#FF0000;"></div>
<div class="r" style="left:0px;top:79px;width:743px;height:1px;background:#C0C0C0;"></div>
<div class="r" style="left:6px;top:72px;width:3px;height:1px;background:#000;"></div>
<div class="t" style="left:25.00px;top:65px;font-size:13px;line-height:13px;color:#000;font-weight:bold;transform:scaleX(1.0175);transform-origin:0 0;">01/17/2003 10:03 a</div>
<div class="t" style="left:176.00px;top:65px;font-size:13px;line-height:13px;color:#000;font-weight:bold;">97.8</div>
<div class="t" style="left:228.00px;top:65px;font-size:13px;line-height:13px;color:#000;font-weight:bold;">2.40</div>
<div class="t" style="left:277.00px;top:65px;font-size:13px;line-height:13px;color:#000;font-weight:bold;">224</div>
<div class="t" style="left:346.00px;top:65px;font-size:13px;line-height:13px;color:#000;font-weight:bold;">0</div>
<div class="t" style="left:368.00px;top:65px;font-size:13px;line-height:13px;color:#000;font-weight:bold;transform:scaleX(1.0088);transform-origin:0 0;">01/17/2003 09:46 a</div>
<div class="r" style="left:711px;top:72px;width:3px;height:1px;background:#000;"></div>
<div class="r" style="left:715px;top:72px;width:3px;height:1px;background:#000;"></div>
<div class="r" style="left:719px;top:72px;width:3px;height:1px;background:#000;"></div>
<div class="r" style="left:723px;top:72px;width:3px;height:1px;background:#000;"></div>
<div class="r" style="left:727px;top:72px;width:3px;height:1px;background:#000;"></div>
<div class="r" style="left:731px;top:72px;width:3px;height:1px;background:#000;"></div>
<div class="r" style="left:735px;top:72px;width:3px;height:1px;background:#000;"></div>
<div class="r" style="left:739px;top:72px;width:3px;height:1px;background:#000;"></div>
<div class="r" style="left:0px;top:95px;width:743px;height:1px;background:#C0C0C0;"></div>
<div class="r" style="left:3px;top:88px;width:6px;height:1px;background:#000;"></div>
<div class="r" style="left:5px;top:86px;width:2px;height:5px;background:#000;"></div>
<div class="t" style="left:25.00px;top:81px;font-size:13px;line-height:13px;color:#000;font-weight:bold;transform:scaleX(1.0265);transform-origin:0 0;">01/17/2003 05:11 p</div>
<div class="t" style="left:179.00px;top:81px;font-size:13px;line-height:13px;color:#000;font-weight:bold;">106</div>
<div class="t" style="left:228.00px;top:81px;font-size:13px;line-height:13px;color:#000;font-weight:bold;">3.29</div>
<div class="t" style="left:277.00px;top:81px;font-size:13px;line-height:13px;color:#000;font-weight:bold;">224</div>
<div class="t" style="left:346.00px;top:81px;font-size:13px;line-height:13px;color:#000;font-weight:bold;">0</div>
<div class="t" style="left:368.00px;top:81px;font-size:13px;line-height:13px;color:#000;font-weight:bold;transform:scaleX(1.0088);transform-origin:0 0;">01/17/2003 04:58 p</div>
<div class="r" style="left:711px;top:88px;width:3px;height:1px;background:#000;"></div>
<div class="r" style="left:715px;top:88px;width:3px;height:1px;background:#000;"></div>
<div class="r" style="left:719px;top:88px;width:3px;height:1px;background:#000;"></div>
<div class="r" style="left:723px;top:88px;width:3px;height:1px;background:#000;"></div>
<div class="r" style="left:727px;top:88px;width:3px;height:1px;background:#000;"></div>
<div class="r" style="left:731px;top:88px;width:3px;height:1px;background:#000;"></div>
<div class="r" style="left:735px;top:88px;width:3px;height:1px;background:#000;"></div>
<div class="r" style="left:739px;top:88px;width:3px;height:1px;background:#000;"></div>
<div class="r" style="left:0px;top:111px;width:743px;height:1px;background:#C0C0C0;"></div>
<div class="r" style="left:3px;top:104px;width:6px;height:1px;background:#000;"></div>
<div class="r" style="left:5px;top:102px;width:2px;height:5px;background:#000;"></div>
<div class="t" style="left:25.00px;top:97px;font-size:13px;line-height:13px;color:#000;font-weight:bold;transform:scaleX(1.0175);transform-origin:0 0;">01/24/2003 09:40 a</div>
<div class="t" style="left:176.00px;top:97px;font-size:13px;line-height:13px;color:#000;font-weight:bold;">70.0</div>
<div class="t" style="left:223.00px;top:97px;font-size:13px;line-height:13px;color:#000;font-weight:bold;">-0.53</div>
<div class="t" style="left:277.00px;top:97px;font-size:13px;line-height:13px;color:#000;font-weight:bold;">225</div>
<div class="t" style="left:346.00px;top:97px;font-size:13px;line-height:13px;color:#000;font-weight:bold;">0</div>
<div class="t" style="left:368.00px;top:97px;font-size:13px;line-height:13px;color:#000;font-weight:bold;transform:scaleX(1.0088);transform-origin:0 0;">01/17/2003 08:10 p</div>
<div class="r" style="left:711px;top:104px;width:3px;height:1px;background:#000;"></div>
<div class="r" style="left:715px;top:104px;width:3px;height:1px;background:#000;"></div>
<div class="r" style="left:719px;top:104px;width:3px;height:1px;background:#000;"></div>
<div class="r" style="left:723px;top:104px;width:3px;height:1px;background:#000;"></div>
<div class="r" style="left:727px;top:104px;width:3px;height:1px;background:#000;"></div>
<div class="r" style="left:731px;top:104px;width:3px;height:1px;background:#000;"></div>
<div class="r" style="left:735px;top:104px;width:3px;height:1px;background:#000;"></div>
<div class="r" style="left:739px;top:104px;width:3px;height:1px;background:#000;"></div>
<div class="r" style="left:0px;top:127px;width:743px;height:1px;background:#C0C0C0;"></div>
<div class="r" style="left:3px;top:120px;width:6px;height:1px;background:#000;"></div>
<div class="r" style="left:5px;top:118px;width:2px;height:5px;background:#000;"></div>
<div class="t" style="left:25.00px;top:113px;font-size:13px;line-height:13px;color:#000;font-weight:bold;transform:scaleX(1.0265);transform-origin:0 0;">01/27/2003 11:06 a</div>
<div class="t" style="left:176.00px;top:113px;font-size:13px;line-height:13px;color:#000;font-weight:bold;">90.6</div>
<div class="t" style="left:227.00px;top:113px;font-size:13px;line-height:13px;color:#000;font-weight:bold;">1.64</div>
<div class="t" style="left:277.00px;top:113px;font-size:13px;line-height:13px;color:#000;font-weight:bold;">225</div>
<div class="t" style="left:346.00px;top:113px;font-size:13px;line-height:13px;color:#000;font-weight:bold;">0</div>
<div class="t" style="left:368.00px;top:113px;font-size:13px;line-height:13px;color:#000;font-weight:bold;transform:scaleX(1.0088);transform-origin:0 0;">01/17/2003 08:10 p</div>
<div class="r" style="left:711px;top:120px;width:3px;height:1px;background:#000;"></div>
<div class="r" style="left:715px;top:120px;width:3px;height:1px;background:#000;"></div>
<div class="r" style="left:719px;top:120px;width:3px;height:1px;background:#000;"></div>
<div class="r" style="left:723px;top:120px;width:3px;height:1px;background:#000;"></div>
<div class="r" style="left:727px;top:120px;width:3px;height:1px;background:#000;"></div>
<div class="r" style="left:731px;top:120px;width:3px;height:1px;background:#000;"></div>
<div class="r" style="left:735px;top:120px;width:3px;height:1px;background:#000;"></div>
<div class="r" style="left:739px;top:120px;width:3px;height:1px;background:#000;"></div>
<div class="r" style="left:13px;top:128px;width:730px;height:15px;background:#FF0000;"></div>
<div class="r" style="left:0px;top:143px;width:743px;height:1px;background:#C0C0C0;"></div>
<div class="r" style="left:3px;top:136px;width:6px;height:1px;background:#000;"></div>
<div class="r" style="left:5px;top:134px;width:2px;height:5px;background:#000;"></div>
<div class="t" style="left:25.00px;top:129px;font-size:13px;line-height:13px;color:#000;font-weight:bold;transform:scaleX(1.0175);transform-origin:0 0;">01/29/2003 09:39 a</div>
<div class="t" style="left:176.00px;top:129px;font-size:13px;line-height:13px;color:#000;font-weight:bold;">96.5</div>
<div class="t" style="left:228.00px;top:129px;font-size:13px;line-height:13px;color:#000;font-weight:bold;">2.26</div>
<div class="t" style="left:277.00px;top:129px;font-size:13px;line-height:13px;color:#000;font-weight:bold;">225</div>
<div class="t" style="left:346.00px;top:129px;font-size:13px;line-height:13px;color:#000;font-weight:bold;">0</div>
<div class="t" style="left:368.00px;top:129px;font-size:13px;line-height:13px;color:#000;font-weight:bold;transform:scaleX(1.0088);transform-origin:0 0;">01/17/2003 08:10 p</div>
<div class="r" style="left:711px;top:136px;width:3px;height:1px;background:#000;"></div>
<div class="r" style="left:715px;top:136px;width:3px;height:1px;background:#000;"></div>
<div class="r" style="left:719px;top:136px;width:3px;height:1px;background:#000;"></div>
<div class="r" style="left:723px;top:136px;width:3px;height:1px;background:#000;"></div>
<div class="r" style="left:727px;top:136px;width:3px;height:1px;background:#000;"></div>
<div class="r" style="left:731px;top:136px;width:3px;height:1px;background:#000;"></div>
<div class="r" style="left:735px;top:136px;width:3px;height:1px;background:#000;"></div>
<div class="r" style="left:739px;top:136px;width:3px;height:1px;background:#000;"></div>
<div class="r" style="left:13px;top:144px;width:730px;height:15px;background:#FF0000;"></div>
<div class="r" style="left:0px;top:159px;width:743px;height:1px;background:#C0C0C0;"></div>
<div class="r" style="left:6px;top:152px;width:3px;height:1px;background:#000;"></div>
<div class="t" style="left:25.00px;top:145px;font-size:13px;line-height:13px;color:#000;font-weight:bold;transform:scaleX(1.0175);transform-origin:0 0;">01/31/2003 09:34 a</div>
<div class="t" style="left:179.00px;top:145px;font-size:13px;line-height:13px;color:#000;font-weight:bold;">108</div>
<div class="t" style="left:228.00px;top:145px;font-size:13px;line-height:13px;color:#000;font-weight:bold;">3.52</div>
<div class="t" style="left:277.00px;top:145px;font-size:13px;line-height:13px;color:#000;font-weight:bold;">225</div>
<div class="t" style="left:346.00px;top:145px;font-size:13px;line-height:13px;color:#000;font-weight:bold;">0</div>
<div class="t" style="left:368.00px;top:145px;font-size:13px;line-height:13px;color:#000;font-weight:bold;transform:scaleX(1.0088);transform-origin:0 0;">01/31/2003 09:17 a</div>
<div class="r" style="left:711px;top:152px;width:3px;height:1px;background:#000;"></div>
<div class="r" style="left:715px;top:152px;width:3px;height:1px;background:#000;"></div>
<div class="r" style="left:719px;top:152px;width:3px;height:1px;background:#000;"></div>
<div class="r" style="left:723px;top:152px;width:3px;height:1px;background:#000;"></div>
<div class="r" style="left:727px;top:152px;width:3px;height:1px;background:#000;"></div>
<div class="r" style="left:731px;top:152px;width:3px;height:1px;background:#000;"></div>
<div class="r" style="left:735px;top:152px;width:3px;height:1px;background:#000;"></div>
<div class="r" style="left:739px;top:152px;width:3px;height:1px;background:#000;"></div>
<div class="r" style="left:0px;top:175px;width:743px;height:1px;background:#C0C0C0;"></div>
<div class="r" style="left:3px;top:168px;width:6px;height:1px;background:#000;"></div>
<div class="r" style="left:5px;top:166px;width:2px;height:5px;background:#000;"></div>
<div class="t" style="left:25.00px;top:161px;font-size:13px;line-height:13px;color:#000;font-weight:bold;transform:scaleX(1.0265);transform-origin:0 0;">01/31/2003 11:02 a</div>
<div class="t" style="left:176.00px;top:161px;font-size:13px;line-height:13px;color:#000;font-weight:bold;">83.0</div>
<div class="t" style="left:227.00px;top:161px;font-size:13px;line-height:13px;color:#000;font-weight:bold;">0.84</div>
<div class="t" style="left:277.00px;top:161px;font-size:13px;line-height:13px;color:#000;font-weight:bold;">225</div>
<div class="t" style="left:346.00px;top:161px;font-size:13px;line-height:13px;color:#000;font-weight:bold;">0</div>
<div class="t" style="left:368.00px;top:161px;font-size:13px;line-height:13px;color:#000;font-weight:bold;transform:scaleX(1.0088);transform-origin:0 0;">01/31/2003 10:56 a</div>
<div class="r" style="left:711px;top:168px;width:3px;height:1px;background:#000;"></div>
<div class="r" style="left:715px;top:168px;width:3px;height:1px;background:#000;"></div>
<div class="r" style="left:719px;top:168px;width:3px;height:1px;background:#000;"></div>
<div class="r" style="left:723px;top:168px;width:3px;height:1px;background:#000;"></div>
<div class="r" style="left:727px;top:168px;width:3px;height:1px;background:#000;"></div>
<div class="r" style="left:731px;top:168px;width:3px;height:1px;background:#000;"></div>
<div class="r" style="left:735px;top:168px;width:3px;height:1px;background:#000;"></div>
<div class="r" style="left:739px;top:168px;width:3px;height:1px;background:#000;"></div>
<div class="r" style="left:0px;top:191px;width:743px;height:1px;background:#C0C0C0;"></div>
<div class="r" style="left:3px;top:184px;width:6px;height:1px;background:#000;"></div>
<div class="r" style="left:5px;top:182px;width:2px;height:5px;background:#000;"></div>
<div class="t" style="left:25.00px;top:177px;font-size:13px;line-height:13px;color:#000;font-weight:bold;transform:scaleX(1.0175);transform-origin:0 0;">02/05/2003 12:00 p</div>
<div class="t" style="left:176.00px;top:177px;font-size:13px;line-height:13px;color:#000;font-weight:bold;">77.2</div>
<div class="t" style="left:227.00px;top:177px;font-size:13px;line-height:13px;color:#000;font-weight:bold;">0.24</div>
<div class="t" style="left:277.00px;top:177px;font-size:13px;line-height:13px;color:#000;font-weight:bold;">225</div>
<div class="t" style="left:346.00px;top:177px;font-size:13px;line-height:13px;color:#000;font-weight:bold;">0</div>
<div class="t" style="left:368.00px;top:177px;font-size:13px;line-height:13px;color:#000;font-weight:bold;transform:scaleX(1.0088);transform-origin:0 0;">01/31/2003 10:56 a</div>
<div class="r" style="left:711px;top:184px;width:3px;height:1px;background:#000;"></div>
<div class="r" style="left:715px;top:184px;width:3px;height:1px;background:#000;"></div>
<div class="r" style="left:719px;top:184px;width:3px;height:1px;background:#000;"></div>
<div class="r" style="left:723px;top:184px;width:3px;height:1px;background:#000;"></div>
<div class="r" style="left:727px;top:184px;width:3px;height:1px;background:#000;"></div>
<div class="r" style="left:731px;top:184px;width:3px;height:1px;background:#000;"></div>
<div class="r" style="left:735px;top:184px;width:3px;height:1px;background:#000;"></div>
<div class="r" style="left:739px;top:184px;width:3px;height:1px;background:#000;"></div>
<div class="r" style="left:0px;top:207px;width:743px;height:1px;background:#C0C0C0;"></div>
<div class="r" style="left:3px;top:200px;width:6px;height:1px;background:#000;"></div>
<div class="r" style="left:5px;top:198px;width:2px;height:5px;background:#000;"></div>
<div class="t" style="left:25.00px;top:193px;font-size:13px;line-height:13px;color:#000;font-weight:bold;transform:scaleX(1.0175);transform-origin:0 0;">02/12/2003 09:15 a</div>
<div class="t" style="left:176.00px;top:193px;font-size:13px;line-height:13px;color:#000;font-weight:bold;">58.2</div>
<div class="t" style="left:223.00px;top:193px;font-size:13px;line-height:13px;color:#000;font-weight:bold;">-1.77</div>
<div class="t" style="left:277.00px;top:193px;font-size:13px;line-height:13px;color:#000;font-weight:bold;">225</div>
<div class="t" style="left:346.00px;top:193px;font-size:13px;line-height:13px;color:#000;font-weight:bold;">0</div>
<div class="t" style="left:368.00px;top:193px;font-size:13px;line-height:13px;color:#000;font-weight:bold;transform:scaleX(1.0088);transform-origin:0 0;">01/31/2003 10:56 a</div>
<div class="r" style="left:711px;top:200px;width:3px;height:1px;background:#000;"></div>
<div class="r" style="left:715px;top:200px;width:3px;height:1px;background:#000;"></div>
<div class="r" style="left:719px;top:200px;width:3px;height:1px;background:#000;"></div>
<div class="r" style="left:723px;top:200px;width:3px;height:1px;background:#000;"></div>
<div class="r" style="left:727px;top:200px;width:3px;height:1px;background:#000;"></div>
<div class="r" style="left:731px;top:200px;width:3px;height:1px;background:#000;"></div>
<div class="r" style="left:735px;top:200px;width:3px;height:1px;background:#000;"></div>
<div class="r" style="left:739px;top:200px;width:3px;height:1px;background:#000;"></div>
<div class="r" style="left:0px;top:223px;width:743px;height:1px;background:#C0C0C0;"></div>
<div class="r" style="left:3px;top:216px;width:6px;height:1px;background:#000;"></div>
<div class="r" style="left:5px;top:214px;width:2px;height:5px;background:#000;"></div>
<div class="t" style="left:25.00px;top:209px;font-size:13px;line-height:13px;color:#000;font-weight:bold;transform:scaleX(1.0265);transform-origin:0 0;">02/12/2003 11:47 a</div>
<div class="t" style="left:176.00px;top:209px;font-size:13px;line-height:13px;color:#000;font-weight:bold;">85.0</div>
<div class="t" style="left:228.00px;top:209px;font-size:13px;line-height:13px;color:#000;font-weight:bold;">1.05</div>
<div class="t" style="left:277.00px;top:209px;font-size:13px;line-height:13px;color:#000;font-weight:bold;">225</div>
<div class="t" style="left:346.00px;top:209px;font-size:13px;line-height:13px;color:#000;font-weight:bold;">0</div>
<div class="t" style="left:368.00px;top:209px;font-size:13px;line-height:13px;color:#000;font-weight:bold;transform:scaleX(1.0088);transform-origin:0 0;">01/31/2003 10:56 a</div>
<div class="r" style="left:711px;top:216px;width:3px;height:1px;background:#000;"></div>
<div class="r" style="left:715px;top:216px;width:3px;height:1px;background:#000;"></div>
<div class="r" style="left:719px;top:216px;width:3px;height:1px;background:#000;"></div>
<div class="r" style="left:723px;top:216px;width:3px;height:1px;background:#000;"></div>
<div class="r" style="left:727px;top:216px;width:3px;height:1px;background:#000;"></div>
<div class="r" style="left:731px;top:216px;width:3px;height:1px;background:#000;"></div>
<div class="r" style="left:735px;top:216px;width:3px;height:1px;background:#000;"></div>
<div class="r" style="left:739px;top:216px;width:3px;height:1px;background:#000;"></div>
<div class="r" style="left:0px;top:239px;width:743px;height:1px;background:#C0C0C0;"></div>
<div class="r" style="left:3px;top:232px;width:6px;height:1px;background:#000;"></div>
<div class="r" style="left:5px;top:230px;width:2px;height:5px;background:#000;"></div>
<div class="t" style="left:25.00px;top:225px;font-size:13px;line-height:13px;color:#000;font-weight:bold;transform:scaleX(1.0175);transform-origin:0 0;">02/17/2003 09:15 a</div>
<div class="t" style="left:176.00px;top:225px;font-size:13px;line-height:13px;color:#000;font-weight:bold;">94.3</div>
<div class="t" style="left:228.00px;top:225px;font-size:13px;line-height:13px;color:#000;font-weight:bold;">2.03</div>
<div class="t" style="left:277.00px;top:225px;font-size:13px;line-height:13px;color:#000;font-weight:bold;">225</div>
<div class="t" style="left:346.00px;top:225px;font-size:13px;line-height:13px;color:#000;font-weight:bold;">0</div>
<div class="t" style="left:368.00px;top:225px;font-size:13px;line-height:13px;color:#000;font-weight:bold;transform:scaleX(1.0088);transform-origin:0 0;">01/31/2003 10:56 a</div>
<div class="r" style="left:711px;top:232px;width:3px;height:1px;background:#000;"></div>
<div class="r" style="left:715px;top:232px;width:3px;height:1px;background:#000;"></div>
<div class="r" style="left:719px;top:232px;width:3px;height:1px;background:#000;"></div>
<div class="r" style="left:723px;top:232px;width:3px;height:1px;background:#000;"></div>
<div class="r" style="left:727px;top:232px;width:3px;height:1px;background:#000;"></div>
<div class="r" style="left:731px;top:232px;width:3px;height:1px;background:#000;"></div>
<div class="r" style="left:735px;top:232px;width:3px;height:1px;background:#000;"></div>
<div class="r" style="left:739px;top:232px;width:3px;height:1px;background:#000;"></div>
<div class="r" style="left:12px;top:0px;width:1px;height:229px;background:#C0C0C0;"></div>
<div class="r" style="left:142px;top:0px;width:1px;height:229px;background:#C0C0C0;"></div>
<div class="r" style="left:205px;top:0px;width:1px;height:229px;background:#C0C0C0;"></div>
<div class="r" style="left:255px;top:0px;width:1px;height:229px;background:#C0C0C0;"></div>
<div class="r" style="left:302px;top:0px;width:1px;height:229px;background:#C0C0C0;"></div>
<div class="r" style="left:355px;top:0px;width:1px;height:229px;background:#C0C0C0;"></div>
<div class="r" style="left:485px;top:0px;width:1px;height:229px;background:#C0C0C0;"></div>
<div class="r" style="left:562px;top:0px;width:1px;height:229px;background:#C0C0C0;"></div>
</div>
<div class="r" style="left:886px;top:315px;width:16px;height:256px;background:#E8E6E2;background-image:repeating-conic-gradient(#D4D0C8 0 25%,#fff 0 50%);background-size:2px 2px;"></div>
<div class="r" style="left:886px;top:315px;width:16px;height:16px;background:#D4D0C8;"></div>
<div class="r" style="left:886px;top:315px;width:16px;height:1px;background:#fff;"></div>
<div class="r" style="left:886px;top:315px;width:1px;height:16px;background:#fff;"></div>
<div class="r" style="left:886px;top:330px;width:16px;height:1px;background:#404040;"></div>
<div class="r" style="left:901px;top:315px;width:1px;height:16px;background:#404040;"></div>
<div class="r" style="left:887px;top:329px;width:14px;height:1px;background:#808080;"></div>
<div class="r" style="left:900px;top:316px;width:1px;height:14px;background:#808080;"></div>
<div class="r" style="left:886px;top:315px;width:16px;height:1px;background:#D4D0C8;"></div>
<div class="r" style="left:886px;top:315px;width:1px;height:16px;background:#D4D0C8;"></div>
<div class="r" style="left:887px;top:316px;width:13px;height:1px;background:#fff;"></div>
<div class="r" style="left:887px;top:316px;width:1px;height:13px;background:#fff;"></div>
<div class="r" style="left:894px;top:321px;width:1px;height:1px;background:#000;"></div>
<div class="r" style="left:893px;top:322px;width:3px;height:1px;background:#000;"></div>
<div class="r" style="left:892px;top:323px;width:5px;height:1px;background:#000;"></div>
<div class="r" style="left:891px;top:324px;width:7px;height:1px;background:#000;"></div>
<div class="r" style="left:886px;top:331px;width:16px;height:16px;background:#D4D0C8;"></div>
<div class="r" style="left:886px;top:331px;width:16px;height:1px;background:#fff;"></div>
<div class="r" style="left:886px;top:331px;width:1px;height:16px;background:#fff;"></div>
<div class="r" style="left:886px;top:346px;width:16px;height:1px;background:#404040;"></div>
<div class="r" style="left:901px;top:331px;width:1px;height:16px;background:#404040;"></div>
<div class="r" style="left:887px;top:345px;width:14px;height:1px;background:#808080;"></div>
<div class="r" style="left:900px;top:332px;width:1px;height:14px;background:#808080;"></div>
<div class="r" style="left:886px;top:331px;width:16px;height:1px;background:#D4D0C8;"></div>
<div class="r" style="left:886px;top:331px;width:1px;height:16px;background:#D4D0C8;"></div>
<div class="r" style="left:887px;top:332px;width:13px;height:1px;background:#fff;"></div>
<div class="r" style="left:887px;top:332px;width:1px;height:13px;background:#fff;"></div>
<div class="r" style="left:886px;top:556px;width:16px;height:16px;background:#D4D0C8;"></div>
<div class="r" style="left:886px;top:556px;width:16px;height:1px;background:#fff;"></div>
<div class="r" style="left:886px;top:556px;width:1px;height:16px;background:#fff;"></div>
<div class="r" style="left:886px;top:571px;width:16px;height:1px;background:#404040;"></div>
<div class="r" style="left:901px;top:556px;width:1px;height:16px;background:#404040;"></div>
<div class="r" style="left:887px;top:570px;width:14px;height:1px;background:#808080;"></div>
<div class="r" style="left:900px;top:557px;width:1px;height:14px;background:#808080;"></div>
<div class="r" style="left:886px;top:556px;width:16px;height:1px;background:#D4D0C8;"></div>
<div class="r" style="left:886px;top:556px;width:1px;height:16px;background:#D4D0C8;"></div>
<div class="r" style="left:887px;top:557px;width:13px;height:1px;background:#fff;"></div>
<div class="r" style="left:887px;top:557px;width:1px;height:13px;background:#fff;"></div>
<div class="r" style="left:891px;top:561px;width:7px;height:1px;background:#000;"></div>
<div class="r" style="left:892px;top:562px;width:5px;height:1px;background:#000;"></div>
<div class="r" style="left:893px;top:563px;width:3px;height:1px;background:#000;"></div>
<div class="r" style="left:894px;top:564px;width:1px;height:1px;background:#000;"></div>
</body></html>
